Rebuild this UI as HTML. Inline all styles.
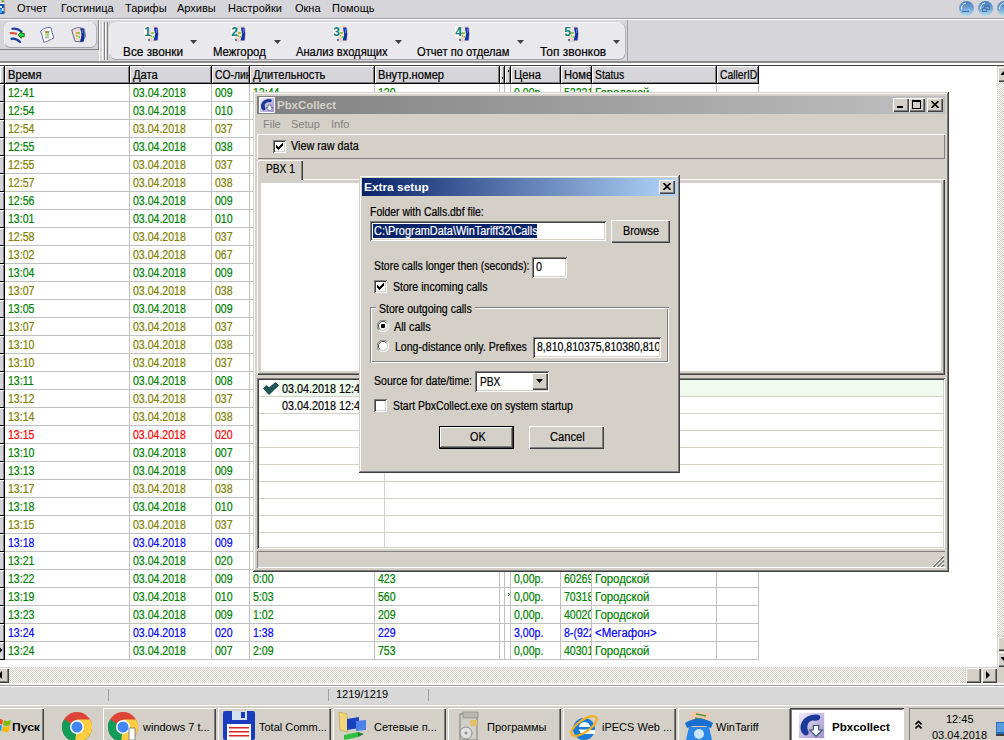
<!DOCTYPE html><html><head><meta charset="utf-8"><style>
*{margin:0;padding:0;box-sizing:border-box}
html,body{width:1004px;height:740px;overflow:hidden;background:#d6d5d9;font-family:"Liberation Sans",sans-serif;font-size:11px;color:#000}
div,span,svg{position:absolute}
.t{white-space:nowrap;line-height:13px;transform-origin:0 0}
.ms{-webkit-text-stroke:0.2px currentColor;-webkit-font-smoothing:antialiased}
</style></head><body>
<div style="left:0px;top:18px;width:1004px;height:1px;background:#a0a0a0"></div>
<div style="left:0px;top:19px;width:1004px;height:1px;background:#fff"></div>
<span class="t" style="left:17px;top:2px;font-size:11px;font-weight:normal;">Отчет</span>
<span class="t" style="left:61px;top:2px;font-size:11px;font-weight:normal;">Гостиница</span>
<span class="t" style="left:125px;top:2px;font-size:11px;font-weight:normal;">Тарифы</span>
<span class="t" style="left:177px;top:2px;font-size:11px;font-weight:normal;">Архивы</span>
<span class="t" style="left:228px;top:2px;font-size:11px;font-weight:normal;">Настройки</span>
<span class="t" style="left:295px;top:2px;font-size:11px;font-weight:normal;">Окна</span>
<span class="t" style="left:332px;top:2px;font-size:11px;font-weight:normal;">Помощь</span>
<svg style="left:0px;top:0px" width="10" height="16" viewBox="0 0 10 16"><path d="M0 1 L4 1 L6 5 L8 10 L6 13 L0 14Z" fill="#f0c8b8"/><rect x="0" y="3" width="4" height="1" fill="#fff"/><rect x="0" y="4" width="4.5" height="10" fill="#0a58b8"/><rect x="0" y="6" width="2" height="2" fill="#fff"/><rect x="2" y="8" width="1.5" height="3" fill="#fff"/><rect x="0" y="9" width="2" height="4" fill="#40a8f0"/><ellipse cx="3" cy="1.2" rx="1.5" ry="0.9" fill="#50a040"/></svg>
<div style="left:959px;top:1px;width:15px;height:15px;border-radius:50%;background:linear-gradient(180deg,#4278bc 0%,#72a6d8 50%,#b4dcea 100%)"></div>
<svg style="left:959px;top:1px" width="15" height="15" viewBox="0 0 15 15"><path d="M2.5 8 Q2.5 3 7 2" stroke="#e8f2fa" stroke-width="1" fill="none"/></svg>
<div style="left:978px;top:1px;width:15px;height:15px;border-radius:50%;background:linear-gradient(180deg,#4278bc 0%,#72a6d8 50%,#b4dcea 100%)"></div>
<svg style="left:978px;top:1px" width="15" height="15" viewBox="0 0 15 15"><path d="M2.5 8 Q2.5 3 7 2" stroke="#e8f2fa" stroke-width="1" fill="none"/></svg>
<div style="left:997px;top:1px;width:15px;height:15px;border-radius:50%;background:linear-gradient(180deg,#4278bc 0%,#72a6d8 50%,#b4dcea 100%)"></div>
<svg style="left:997px;top:1px" width="15" height="15" viewBox="0 0 15 15"><path d="M2.5 8 Q2.5 3 7 2" stroke="#e8f2fa" stroke-width="1" fill="none"/></svg>
<div style="left:962px;top:11px;width:7px;height:1px;background:#3a6aa8"></div>
<div style="left:984px;top:5px;width:6px;height:5px;border:1px solid #4a78b0;border-top-width:2px"></div>
<div style="left:982px;top:8px;width:5px;height:4px;border:1px solid #4a78b0;background:#7aaad8"></div>
<div style="left:0px;top:20px;width:99px;height:30px;box-shadow:inset -1px -1px #808080"></div>
<div style="left:5px;top:23px;width:91px;height:24px;border-radius:5px;background:#e9e8ec;box-shadow:0 1px #a4a3a8,1px 0 #b4b3b8,0 -1px #f4f4f6,-1px 0 #f0f0f2"></div>
<svg style="left:9px;top:27px" width="16" height="16" viewBox="0 0 16 16"><path d="M3.5 1.8 Q8 0.8 12.5 4.5" stroke="#1a40a0" stroke-width="2.2" fill="none" stroke-linecap="round"/><path d="M0.8 6.2 Q4 5.5 8 7" stroke="#e84a30" stroke-width="2.2" fill="none"/><path d="M2.5 11.8 Q7 11 11 15" stroke="#1a40a0" stroke-width="2.2" fill="none" stroke-linecap="round"/><path d="M9.3 8 L12.3 4.6 L12.3 6.4 L15.2 6.4 L15.2 9.6 L12.3 9.6 L12.3 11.4 Z" fill="#00f040" stroke="#205000" stroke-width="0.9"/></svg>
<svg style="left:40px;top:27px" width="16" height="16" viewBox="0 0 16 16"><path d="M0.5 4.2 L3.3 2 L7.2 0.5 L10.8 0.5 L12.2 5.4 L13.8 11 L7.2 14.3 L3.8 15.4 L2.1 8.2 Z" fill="#fffcf8" stroke="#5060a8" stroke-width="0.9"/><rect x="5.2" y="4" width="2" height="2" fill="#f07830"/><rect x="7.2" y="4" width="2" height="2" fill="#60b040"/><rect x="5.2" y="6" width="4" height="5" fill="#a8d898"/><rect x="5.2" y="10" width="4" height="1.5" fill="#b8c0c8"/></svg>
<svg style="left:71px;top:27px" width="16" height="16" viewBox="0 0 16 16"><path d="M0.7 3 L6.3 0.5 L13 1.5 L14.6 9.3 L11.3 14.8 L4 14.3 Z" fill="#f4dcd0" stroke="#506090" stroke-width="0.9"/><path d="M9 1.5 L12.5 1.8 Q14.5 8 12.5 14.8 L9 14.5 L10 11 Q11 8 10 4 Z" fill="#0c2a98"/><rect x="11" y="3" width="1.2" height="3" fill="#3a90e0"/><rect x="5" y="5" width="2" height="2" fill="#f0a040"/><rect x="7" y="5" width="2" height="2" fill="#80d040"/><rect x="5" y="8" width="1.5" height="2" fill="#f0a040"/><rect x="7.5" y="9" width="1.5" height="2" fill="#40f020"/></svg>
<div style="left:99px;top:20px;width:1px;height:41px;background:#fff"></div>
<div style="left:102px;top:22px;width:1px;height:38px;background:#fff"></div>
<div style="left:104px;top:22px;width:1px;height:38px;background:#808080"></div>
<div style="left:105px;top:22px;width:1px;height:38px;background:#fff"></div>
<div style="left:107px;top:22px;width:1px;height:38px;background:#808080"></div>
<div style="left:110px;top:23px;width:515px;height:36px;border-radius:6px;background:#e9e8ec;box-shadow:0 1px #a4a3a8,1px 0 #b4b3b8,0 -1px #f4f4f6,-1px 0 #f0f0f2"></div>
<div style="left:627px;top:20px;width:1px;height:42px;background:#a0a0a0"></div>
<span class="t ms" style="left:123px;top:46px;font-size:12px;font-weight:normal;transform:scaleX(0.985);">Все звонки</span>
<svg style="left:144px;top:26px" width="16" height="16" viewBox="0 0 16 16"><rect x="0" y="0" width="7.5" height="11.5" rx="2" fill="#fff"/><path d="M6 1 L13 0.5 L15 6 L14 14 L8 15.5 L5 12 Z" fill="#f6e4dc" stroke="#e8c4b0" stroke-width=".6"/><path d="M10 1.5 H13.5 Q15 8 13.5 14.5 H9.5 L10.5 11 Q12 8 10.5 5Z" fill="#1432a8"/><path d="M12 3 L13 3 L13 7 L12 7Z" fill="#3a8ae0"/><rect x="7" y="6" width="1" height="2" fill="#f0a040"/><rect x="8" y="6" width="2" height="2" fill="#80d040"/><rect x="7" y="9" width="1" height="2" fill="#f0a040"/><rect x="8.5" y="10" width="1.5" height="2" fill="#60f020"/><path d="M4 12 L8 12 L9 16 L5 16Z" fill="#e8d0c8"/><rect x="4" y="13" width="2" height="2" fill="#6878a0"/><text x="0.3" y="10" font-family="Liberation Sans" font-weight="bold" font-size="12" fill="#008080">1</text></svg>
<svg style="left:190px;top:40px" width="7" height="4" viewBox="0 0 7 4"><path d="M0 0 H7 L3.5 4 Z" fill="#404040"/></svg>
<span class="t ms" style="left:213px;top:46px;font-size:12px;font-weight:normal;transform:scaleX(0.95);">Межгород</span>
<svg style="left:231px;top:26px" width="16" height="16" viewBox="0 0 16 16"><rect x="0" y="0" width="7.5" height="11.5" rx="2" fill="#fff"/><path d="M6 1 L13 0.5 L15 6 L14 14 L8 15.5 L5 12 Z" fill="#f6e4dc" stroke="#e8c4b0" stroke-width=".6"/><path d="M10 1.5 H13.5 Q15 8 13.5 14.5 H9.5 L10.5 11 Q12 8 10.5 5Z" fill="#1432a8"/><path d="M12 3 L13 3 L13 7 L12 7Z" fill="#3a8ae0"/><rect x="7" y="6" width="1" height="2" fill="#f0a040"/><rect x="8" y="6" width="2" height="2" fill="#80d040"/><rect x="7" y="9" width="1" height="2" fill="#f0a040"/><rect x="8.5" y="10" width="1.5" height="2" fill="#60f020"/><path d="M4 12 L8 12 L9 16 L5 16Z" fill="#e8d0c8"/><rect x="4" y="13" width="2" height="2" fill="#6878a0"/><text x="0.3" y="10" font-family="Liberation Sans" font-weight="bold" font-size="12" fill="#008080">2</text></svg>
<svg style="left:274px;top:40px" width="7" height="4" viewBox="0 0 7 4"><path d="M0 0 H7 L3.5 4 Z" fill="#404040"/></svg>
<span class="t ms" style="left:296px;top:46px;font-size:12px;font-weight:normal;transform:scaleX(0.93);">Анализ входящих</span>
<svg style="left:333px;top:26px" width="16" height="16" viewBox="0 0 16 16"><rect x="0" y="0" width="7.5" height="11.5" rx="2" fill="#fff"/><path d="M6 1 L13 0.5 L15 6 L14 14 L8 15.5 L5 12 Z" fill="#f6e4dc" stroke="#e8c4b0" stroke-width=".6"/><path d="M10 1.5 H13.5 Q15 8 13.5 14.5 H9.5 L10.5 11 Q12 8 10.5 5Z" fill="#1432a8"/><path d="M12 3 L13 3 L13 7 L12 7Z" fill="#3a8ae0"/><rect x="7" y="6" width="1" height="2" fill="#f0a040"/><rect x="8" y="6" width="2" height="2" fill="#80d040"/><rect x="7" y="9" width="1" height="2" fill="#f0a040"/><rect x="8.5" y="10" width="1.5" height="2" fill="#60f020"/><path d="M4 12 L8 12 L9 16 L5 16Z" fill="#e8d0c8"/><rect x="4" y="13" width="2" height="2" fill="#6878a0"/><text x="0.3" y="10" font-family="Liberation Sans" font-weight="bold" font-size="12" fill="#008080">3</text></svg>
<svg style="left:395px;top:40px" width="7" height="4" viewBox="0 0 7 4"><path d="M0 0 H7 L3.5 4 Z" fill="#404040"/></svg>
<span class="t ms" style="left:417px;top:46px;font-size:12px;font-weight:normal;transform:scaleX(0.93);">Отчет по отделам</span>
<svg style="left:455px;top:26px" width="16" height="16" viewBox="0 0 16 16"><rect x="0" y="0" width="7.5" height="11.5" rx="2" fill="#fff"/><path d="M6 1 L13 0.5 L15 6 L14 14 L8 15.5 L5 12 Z" fill="#f6e4dc" stroke="#e8c4b0" stroke-width=".6"/><path d="M10 1.5 H13.5 Q15 8 13.5 14.5 H9.5 L10.5 11 Q12 8 10.5 5Z" fill="#1432a8"/><path d="M12 3 L13 3 L13 7 L12 7Z" fill="#3a8ae0"/><rect x="7" y="6" width="1" height="2" fill="#f0a040"/><rect x="8" y="6" width="2" height="2" fill="#80d040"/><rect x="7" y="9" width="1" height="2" fill="#f0a040"/><rect x="8.5" y="10" width="1.5" height="2" fill="#60f020"/><path d="M4 12 L8 12 L9 16 L5 16Z" fill="#e8d0c8"/><rect x="4" y="13" width="2" height="2" fill="#6878a0"/><text x="0.3" y="10" font-family="Liberation Sans" font-weight="bold" font-size="12" fill="#008080">4</text></svg>
<svg style="left:517px;top:40px" width="7" height="4" viewBox="0 0 7 4"><path d="M0 0 H7 L3.5 4 Z" fill="#404040"/></svg>
<span class="t ms" style="left:540px;top:46px;font-size:12px;font-weight:normal;transform:scaleX(0.997);">Топ звонков</span>
<svg style="left:564px;top:26px" width="16" height="16" viewBox="0 0 16 16"><rect x="0" y="0" width="7.5" height="11.5" rx="2" fill="#fff"/><path d="M6 1 L13 0.5 L15 6 L14 14 L8 15.5 L5 12 Z" fill="#f6e4dc" stroke="#e8c4b0" stroke-width=".6"/><path d="M10 1.5 H13.5 Q15 8 13.5 14.5 H9.5 L10.5 11 Q12 8 10.5 5Z" fill="#1432a8"/><path d="M12 3 L13 3 L13 7 L12 7Z" fill="#3a8ae0"/><rect x="7" y="6" width="1" height="2" fill="#f0a040"/><rect x="8" y="6" width="2" height="2" fill="#80d040"/><rect x="7" y="9" width="1" height="2" fill="#f0a040"/><rect x="8.5" y="10" width="1.5" height="2" fill="#60f020"/><path d="M4 12 L8 12 L9 16 L5 16Z" fill="#e8d0c8"/><rect x="4" y="13" width="2" height="2" fill="#6878a0"/><text x="0.3" y="10" font-family="Liberation Sans" font-weight="bold" font-size="12" fill="#008080">5</text></svg>
<svg style="left:613px;top:40px" width="7" height="4" viewBox="0 0 7 4"><path d="M0 0 H7 L3.5 4 Z" fill="#404040"/></svg>
<div style="left:0px;top:61px;width:1004px;height:2px;background:#8c8c8c"></div>
<div style="left:0px;top:63px;width:1004px;height:2px;background:#fff"></div>
<div style="left:0px;top:65px;width:1004px;height:1px;background:#404040"></div>
<div style="left:0px;top:66px;width:997px;height:601px;background:#fff"></div>
<div style="left:0px;top:66px;width:4px;height:17px;background:#d6d5d9;box-shadow:inset 1px 1px #fff,inset -1px -1px #808080;overflow:hidden"></div>
<div style="left:4px;top:66px;width:1px;height:18px;background:#000"></div>
<div style="left:5px;top:66px;width:124px;height:17px;background:#d6d5d9;box-shadow:inset 1px 1px #fff,inset -1px -1px #808080;overflow:hidden"><span class="t ms" style="left:3px;top:3px;font-size:12px;font-weight:normal;transform:scaleX(0.93);">Время</span></div>
<div style="left:129px;top:66px;width:1px;height:18px;background:#000"></div>
<div style="left:130px;top:66px;width:81px;height:17px;background:#d6d5d9;box-shadow:inset 1px 1px #fff,inset -1px -1px #808080;overflow:hidden"><span class="t ms" style="left:3px;top:3px;font-size:12px;font-weight:normal;transform:scaleX(0.93);">Дата</span></div>
<div style="left:211px;top:66px;width:1px;height:18px;background:#000"></div>
<div style="left:212px;top:66px;width:37px;height:17px;background:#d6d5d9;box-shadow:inset 1px 1px #fff,inset -1px -1px #808080;overflow:hidden"><span class="t ms" style="left:3px;top:3px;font-size:12px;font-weight:normal;transform:scaleX(0.86);">CO-линия</span></div>
<div style="left:249px;top:66px;width:1px;height:18px;background:#000"></div>
<div style="left:250px;top:66px;width:124px;height:17px;background:#d6d5d9;box-shadow:inset 1px 1px #fff,inset -1px -1px #808080;overflow:hidden"><span class="t ms" style="left:3px;top:3px;font-size:12px;font-weight:normal;transform:scaleX(0.93);">Длительность</span></div>
<div style="left:374px;top:66px;width:1px;height:18px;background:#000"></div>
<div style="left:375px;top:66px;width:124px;height:17px;background:#d6d5d9;box-shadow:inset 1px 1px #fff,inset -1px -1px #808080;overflow:hidden"><span class="t ms" style="left:3px;top:3px;font-size:12px;font-weight:normal;transform:scaleX(0.93);">Внутр.номер</span></div>
<div style="left:499px;top:66px;width:1px;height:18px;background:#000"></div>
<div style="left:500px;top:66px;width:4px;height:17px;background:#d6d5d9;box-shadow:inset 1px 1px #fff,inset -1px -1px #808080;overflow:hidden"></div>
<div style="left:504px;top:66px;width:1px;height:18px;background:#000"></div>
<div style="left:505px;top:66px;width:5px;height:17px;background:#d6d5d9;box-shadow:inset 1px 1px #fff,inset -1px -1px #808080;overflow:hidden"></div>
<div style="left:510px;top:66px;width:1px;height:18px;background:#000"></div>
<div style="left:511px;top:66px;width:49px;height:17px;background:#d6d5d9;box-shadow:inset 1px 1px #fff,inset -1px -1px #808080;overflow:hidden"><span class="t ms" style="left:3px;top:3px;font-size:12px;font-weight:normal;transform:scaleX(0.93);">Цена</span></div>
<div style="left:560px;top:66px;width:1px;height:18px;background:#000"></div>
<div style="left:561px;top:66px;width:30px;height:17px;background:#d6d5d9;box-shadow:inset 1px 1px #fff,inset -1px -1px #808080;overflow:hidden"><span class="t ms" style="left:3px;top:3px;font-size:12px;font-weight:normal;transform:scaleX(0.93);">Номер</span></div>
<div style="left:591px;top:66px;width:1px;height:18px;background:#000"></div>
<div style="left:592px;top:66px;width:124px;height:17px;background:#d6d5d9;box-shadow:inset 1px 1px #fff,inset -1px -1px #808080;overflow:hidden"><span class="t ms" style="left:3px;top:3px;font-size:12px;font-weight:normal;transform:scaleX(0.86);">Status</span></div>
<div style="left:716px;top:66px;width:1px;height:18px;background:#000"></div>
<div style="left:717px;top:66px;width:41px;height:17px;background:#d6d5d9;box-shadow:inset 1px 1px #fff,inset -1px -1px #808080;overflow:hidden"><span class="t ms" style="left:3px;top:3px;font-size:12px;font-weight:normal;transform:scaleX(0.86);">CallerID</span></div>
<div style="left:758px;top:66px;width:1px;height:18px;background:#000"></div>
<div style="left:0px;top:83px;width:759px;height:1px;background:#000"></div>
<div style="left:502px;top:77px;width:1px;height:2px;background:#000"></div><div style="left:508px;top:70px;width:1px;height:2px;background:#000"></div>
<div style="left:0px;top:84px;width:4px;height:17px;background:#d6d5d9;box-shadow:inset 0 1px #fff,inset -1px 0 #808080"></div>
<div style="left:0px;top:101px;width:4px;height:1px;background:#000"></div>
<div style="left:4px;top:84px;width:1px;height:18px;background:#000"></div>
<div style="left:5px;top:101px;width:754px;height:1px;background:#c0c0c0"></div>
<div style="left:129px;top:84px;width:1px;height:17px;background:#c0c0c0"></div>
<div style="left:211px;top:84px;width:1px;height:17px;background:#c0c0c0"></div>
<div style="left:249px;top:84px;width:1px;height:17px;background:#c0c0c0"></div>
<div style="left:374px;top:84px;width:1px;height:17px;background:#c0c0c0"></div>
<div style="left:499px;top:84px;width:1px;height:17px;background:#c0c0c0"></div>
<div style="left:504px;top:84px;width:1px;height:17px;background:#c0c0c0"></div>
<div style="left:510px;top:84px;width:1px;height:17px;background:#c0c0c0"></div>
<div style="left:560px;top:84px;width:1px;height:17px;background:#c0c0c0"></div>
<div style="left:591px;top:84px;width:1px;height:17px;background:#c0c0c0"></div>
<div style="left:716px;top:84px;width:1px;height:17px;background:#c0c0c0"></div>
<div style="left:758px;top:84px;width:1px;height:17px;background:#c0c0c0"></div>
<div style="left:5px;top:84px;width:124px;height:17px;overflow:hidden"><span class="t ms" style="left:3px;top:3px;font-size:12px;font-weight:normal;transform:scaleX(0.88);color:#008000">12:41</span></div>
<div style="left:130px;top:84px;width:81px;height:17px;overflow:hidden"><span class="t ms" style="left:3px;top:3px;font-size:12px;font-weight:normal;transform:scaleX(0.88);color:#008000">03.04.2018</span></div>
<div style="left:212px;top:84px;width:37px;height:17px;overflow:hidden"><span class="t ms" style="left:3px;top:3px;font-size:12px;font-weight:normal;transform:scaleX(0.88);color:#008000">009</span></div>
<div style="left:250px;top:84px;width:124px;height:17px;overflow:hidden"><span class="t ms" style="left:3px;top:3px;font-size:12px;font-weight:normal;transform:scaleX(0.88);color:#008000">12:44</span></div>
<div style="left:375px;top:84px;width:124px;height:17px;overflow:hidden"><span class="t ms" style="left:3px;top:3px;font-size:12px;font-weight:normal;transform:scaleX(0.88);color:#008000">120</span></div>
<div style="left:511px;top:84px;width:49px;height:17px;overflow:hidden"><span class="t ms" style="left:3px;top:3px;font-size:12px;font-weight:normal;transform:scaleX(0.88);color:#008000">0,00р.</span></div>
<div style="left:561px;top:84px;width:30px;height:17px;overflow:hidden"><span class="t ms" style="left:3px;top:3px;font-size:12px;font-weight:normal;transform:scaleX(0.88);color:#008000">52221</span></div>
<div style="left:592px;top:84px;width:124px;height:17px;overflow:hidden"><span class="t ms" style="left:3px;top:3px;font-size:12px;font-weight:normal;transform:scaleX(0.95);color:#008000">Городской</span></div>
<div style="left:0px;top:102px;width:4px;height:17px;background:#d6d5d9;box-shadow:inset 0 1px #fff,inset -1px 0 #808080"></div>
<div style="left:0px;top:119px;width:4px;height:1px;background:#000"></div>
<div style="left:4px;top:102px;width:1px;height:18px;background:#000"></div>
<div style="left:5px;top:119px;width:754px;height:1px;background:#c0c0c0"></div>
<div style="left:129px;top:102px;width:1px;height:17px;background:#c0c0c0"></div>
<div style="left:211px;top:102px;width:1px;height:17px;background:#c0c0c0"></div>
<div style="left:249px;top:102px;width:1px;height:17px;background:#c0c0c0"></div>
<div style="left:374px;top:102px;width:1px;height:17px;background:#c0c0c0"></div>
<div style="left:499px;top:102px;width:1px;height:17px;background:#c0c0c0"></div>
<div style="left:504px;top:102px;width:1px;height:17px;background:#c0c0c0"></div>
<div style="left:510px;top:102px;width:1px;height:17px;background:#c0c0c0"></div>
<div style="left:560px;top:102px;width:1px;height:17px;background:#c0c0c0"></div>
<div style="left:591px;top:102px;width:1px;height:17px;background:#c0c0c0"></div>
<div style="left:716px;top:102px;width:1px;height:17px;background:#c0c0c0"></div>
<div style="left:758px;top:102px;width:1px;height:17px;background:#c0c0c0"></div>
<div style="left:5px;top:102px;width:124px;height:17px;overflow:hidden"><span class="t ms" style="left:3px;top:3px;font-size:12px;font-weight:normal;transform:scaleX(0.88);color:#008000">12:54</span></div>
<div style="left:130px;top:102px;width:81px;height:17px;overflow:hidden"><span class="t ms" style="left:3px;top:3px;font-size:12px;font-weight:normal;transform:scaleX(0.88);color:#008000">03.04.2018</span></div>
<div style="left:212px;top:102px;width:37px;height:17px;overflow:hidden"><span class="t ms" style="left:3px;top:3px;font-size:12px;font-weight:normal;transform:scaleX(0.88);color:#008000">010</span></div>
<div style="left:0px;top:120px;width:4px;height:17px;background:#d6d5d9;box-shadow:inset 0 1px #fff,inset -1px 0 #808080"></div>
<div style="left:0px;top:137px;width:4px;height:1px;background:#000"></div>
<div style="left:4px;top:120px;width:1px;height:18px;background:#000"></div>
<div style="left:5px;top:137px;width:754px;height:1px;background:#c0c0c0"></div>
<div style="left:129px;top:120px;width:1px;height:17px;background:#c0c0c0"></div>
<div style="left:211px;top:120px;width:1px;height:17px;background:#c0c0c0"></div>
<div style="left:249px;top:120px;width:1px;height:17px;background:#c0c0c0"></div>
<div style="left:374px;top:120px;width:1px;height:17px;background:#c0c0c0"></div>
<div style="left:499px;top:120px;width:1px;height:17px;background:#c0c0c0"></div>
<div style="left:504px;top:120px;width:1px;height:17px;background:#c0c0c0"></div>
<div style="left:510px;top:120px;width:1px;height:17px;background:#c0c0c0"></div>
<div style="left:560px;top:120px;width:1px;height:17px;background:#c0c0c0"></div>
<div style="left:591px;top:120px;width:1px;height:17px;background:#c0c0c0"></div>
<div style="left:716px;top:120px;width:1px;height:17px;background:#c0c0c0"></div>
<div style="left:758px;top:120px;width:1px;height:17px;background:#c0c0c0"></div>
<div style="left:5px;top:120px;width:124px;height:17px;overflow:hidden"><span class="t ms" style="left:3px;top:3px;font-size:12px;font-weight:normal;transform:scaleX(0.88);color:#808000">12:54</span></div>
<div style="left:130px;top:120px;width:81px;height:17px;overflow:hidden"><span class="t ms" style="left:3px;top:3px;font-size:12px;font-weight:normal;transform:scaleX(0.88);color:#808000">03.04.2018</span></div>
<div style="left:212px;top:120px;width:37px;height:17px;overflow:hidden"><span class="t ms" style="left:3px;top:3px;font-size:12px;font-weight:normal;transform:scaleX(0.88);color:#808000">037</span></div>
<div style="left:0px;top:138px;width:4px;height:17px;background:#d6d5d9;box-shadow:inset 0 1px #fff,inset -1px 0 #808080"></div>
<div style="left:0px;top:155px;width:4px;height:1px;background:#000"></div>
<div style="left:4px;top:138px;width:1px;height:18px;background:#000"></div>
<div style="left:5px;top:155px;width:754px;height:1px;background:#c0c0c0"></div>
<div style="left:129px;top:138px;width:1px;height:17px;background:#c0c0c0"></div>
<div style="left:211px;top:138px;width:1px;height:17px;background:#c0c0c0"></div>
<div style="left:249px;top:138px;width:1px;height:17px;background:#c0c0c0"></div>
<div style="left:374px;top:138px;width:1px;height:17px;background:#c0c0c0"></div>
<div style="left:499px;top:138px;width:1px;height:17px;background:#c0c0c0"></div>
<div style="left:504px;top:138px;width:1px;height:17px;background:#c0c0c0"></div>
<div style="left:510px;top:138px;width:1px;height:17px;background:#c0c0c0"></div>
<div style="left:560px;top:138px;width:1px;height:17px;background:#c0c0c0"></div>
<div style="left:591px;top:138px;width:1px;height:17px;background:#c0c0c0"></div>
<div style="left:716px;top:138px;width:1px;height:17px;background:#c0c0c0"></div>
<div style="left:758px;top:138px;width:1px;height:17px;background:#c0c0c0"></div>
<div style="left:5px;top:138px;width:124px;height:17px;overflow:hidden"><span class="t ms" style="left:3px;top:3px;font-size:12px;font-weight:normal;transform:scaleX(0.88);color:#008000">12:55</span></div>
<div style="left:130px;top:138px;width:81px;height:17px;overflow:hidden"><span class="t ms" style="left:3px;top:3px;font-size:12px;font-weight:normal;transform:scaleX(0.88);color:#008000">03.04.2018</span></div>
<div style="left:212px;top:138px;width:37px;height:17px;overflow:hidden"><span class="t ms" style="left:3px;top:3px;font-size:12px;font-weight:normal;transform:scaleX(0.88);color:#008000">038</span></div>
<div style="left:0px;top:156px;width:4px;height:17px;background:#d6d5d9;box-shadow:inset 0 1px #fff,inset -1px 0 #808080"></div>
<div style="left:0px;top:173px;width:4px;height:1px;background:#000"></div>
<div style="left:4px;top:156px;width:1px;height:18px;background:#000"></div>
<div style="left:5px;top:173px;width:754px;height:1px;background:#c0c0c0"></div>
<div style="left:129px;top:156px;width:1px;height:17px;background:#c0c0c0"></div>
<div style="left:211px;top:156px;width:1px;height:17px;background:#c0c0c0"></div>
<div style="left:249px;top:156px;width:1px;height:17px;background:#c0c0c0"></div>
<div style="left:374px;top:156px;width:1px;height:17px;background:#c0c0c0"></div>
<div style="left:499px;top:156px;width:1px;height:17px;background:#c0c0c0"></div>
<div style="left:504px;top:156px;width:1px;height:17px;background:#c0c0c0"></div>
<div style="left:510px;top:156px;width:1px;height:17px;background:#c0c0c0"></div>
<div style="left:560px;top:156px;width:1px;height:17px;background:#c0c0c0"></div>
<div style="left:591px;top:156px;width:1px;height:17px;background:#c0c0c0"></div>
<div style="left:716px;top:156px;width:1px;height:17px;background:#c0c0c0"></div>
<div style="left:758px;top:156px;width:1px;height:17px;background:#c0c0c0"></div>
<div style="left:5px;top:156px;width:124px;height:17px;overflow:hidden"><span class="t ms" style="left:3px;top:3px;font-size:12px;font-weight:normal;transform:scaleX(0.88);color:#808000">12:55</span></div>
<div style="left:130px;top:156px;width:81px;height:17px;overflow:hidden"><span class="t ms" style="left:3px;top:3px;font-size:12px;font-weight:normal;transform:scaleX(0.88);color:#808000">03.04.2018</span></div>
<div style="left:212px;top:156px;width:37px;height:17px;overflow:hidden"><span class="t ms" style="left:3px;top:3px;font-size:12px;font-weight:normal;transform:scaleX(0.88);color:#808000">037</span></div>
<div style="left:0px;top:174px;width:4px;height:17px;background:#d6d5d9;box-shadow:inset 0 1px #fff,inset -1px 0 #808080"></div>
<div style="left:0px;top:191px;width:4px;height:1px;background:#000"></div>
<div style="left:4px;top:174px;width:1px;height:18px;background:#000"></div>
<div style="left:5px;top:191px;width:754px;height:1px;background:#c0c0c0"></div>
<div style="left:129px;top:174px;width:1px;height:17px;background:#c0c0c0"></div>
<div style="left:211px;top:174px;width:1px;height:17px;background:#c0c0c0"></div>
<div style="left:249px;top:174px;width:1px;height:17px;background:#c0c0c0"></div>
<div style="left:374px;top:174px;width:1px;height:17px;background:#c0c0c0"></div>
<div style="left:499px;top:174px;width:1px;height:17px;background:#c0c0c0"></div>
<div style="left:504px;top:174px;width:1px;height:17px;background:#c0c0c0"></div>
<div style="left:510px;top:174px;width:1px;height:17px;background:#c0c0c0"></div>
<div style="left:560px;top:174px;width:1px;height:17px;background:#c0c0c0"></div>
<div style="left:591px;top:174px;width:1px;height:17px;background:#c0c0c0"></div>
<div style="left:716px;top:174px;width:1px;height:17px;background:#c0c0c0"></div>
<div style="left:758px;top:174px;width:1px;height:17px;background:#c0c0c0"></div>
<div style="left:5px;top:174px;width:124px;height:17px;overflow:hidden"><span class="t ms" style="left:3px;top:3px;font-size:12px;font-weight:normal;transform:scaleX(0.88);color:#808000">12:57</span></div>
<div style="left:130px;top:174px;width:81px;height:17px;overflow:hidden"><span class="t ms" style="left:3px;top:3px;font-size:12px;font-weight:normal;transform:scaleX(0.88);color:#808000">03.04.2018</span></div>
<div style="left:212px;top:174px;width:37px;height:17px;overflow:hidden"><span class="t ms" style="left:3px;top:3px;font-size:12px;font-weight:normal;transform:scaleX(0.88);color:#808000">038</span></div>
<div style="left:0px;top:192px;width:4px;height:17px;background:#d6d5d9;box-shadow:inset 0 1px #fff,inset -1px 0 #808080"></div>
<div style="left:0px;top:209px;width:4px;height:1px;background:#000"></div>
<div style="left:4px;top:192px;width:1px;height:18px;background:#000"></div>
<div style="left:5px;top:209px;width:754px;height:1px;background:#c0c0c0"></div>
<div style="left:129px;top:192px;width:1px;height:17px;background:#c0c0c0"></div>
<div style="left:211px;top:192px;width:1px;height:17px;background:#c0c0c0"></div>
<div style="left:249px;top:192px;width:1px;height:17px;background:#c0c0c0"></div>
<div style="left:374px;top:192px;width:1px;height:17px;background:#c0c0c0"></div>
<div style="left:499px;top:192px;width:1px;height:17px;background:#c0c0c0"></div>
<div style="left:504px;top:192px;width:1px;height:17px;background:#c0c0c0"></div>
<div style="left:510px;top:192px;width:1px;height:17px;background:#c0c0c0"></div>
<div style="left:560px;top:192px;width:1px;height:17px;background:#c0c0c0"></div>
<div style="left:591px;top:192px;width:1px;height:17px;background:#c0c0c0"></div>
<div style="left:716px;top:192px;width:1px;height:17px;background:#c0c0c0"></div>
<div style="left:758px;top:192px;width:1px;height:17px;background:#c0c0c0"></div>
<div style="left:5px;top:192px;width:124px;height:17px;overflow:hidden"><span class="t ms" style="left:3px;top:3px;font-size:12px;font-weight:normal;transform:scaleX(0.88);color:#008000">12:56</span></div>
<div style="left:130px;top:192px;width:81px;height:17px;overflow:hidden"><span class="t ms" style="left:3px;top:3px;font-size:12px;font-weight:normal;transform:scaleX(0.88);color:#008000">03.04.2018</span></div>
<div style="left:212px;top:192px;width:37px;height:17px;overflow:hidden"><span class="t ms" style="left:3px;top:3px;font-size:12px;font-weight:normal;transform:scaleX(0.88);color:#008000">009</span></div>
<div style="left:0px;top:210px;width:4px;height:17px;background:#d6d5d9;box-shadow:inset 0 1px #fff,inset -1px 0 #808080"></div>
<div style="left:0px;top:227px;width:4px;height:1px;background:#000"></div>
<div style="left:4px;top:210px;width:1px;height:18px;background:#000"></div>
<div style="left:5px;top:227px;width:754px;height:1px;background:#c0c0c0"></div>
<div style="left:129px;top:210px;width:1px;height:17px;background:#c0c0c0"></div>
<div style="left:211px;top:210px;width:1px;height:17px;background:#c0c0c0"></div>
<div style="left:249px;top:210px;width:1px;height:17px;background:#c0c0c0"></div>
<div style="left:374px;top:210px;width:1px;height:17px;background:#c0c0c0"></div>
<div style="left:499px;top:210px;width:1px;height:17px;background:#c0c0c0"></div>
<div style="left:504px;top:210px;width:1px;height:17px;background:#c0c0c0"></div>
<div style="left:510px;top:210px;width:1px;height:17px;background:#c0c0c0"></div>
<div style="left:560px;top:210px;width:1px;height:17px;background:#c0c0c0"></div>
<div style="left:591px;top:210px;width:1px;height:17px;background:#c0c0c0"></div>
<div style="left:716px;top:210px;width:1px;height:17px;background:#c0c0c0"></div>
<div style="left:758px;top:210px;width:1px;height:17px;background:#c0c0c0"></div>
<div style="left:5px;top:210px;width:124px;height:17px;overflow:hidden"><span class="t ms" style="left:3px;top:3px;font-size:12px;font-weight:normal;transform:scaleX(0.88);color:#008000">13:01</span></div>
<div style="left:130px;top:210px;width:81px;height:17px;overflow:hidden"><span class="t ms" style="left:3px;top:3px;font-size:12px;font-weight:normal;transform:scaleX(0.88);color:#008000">03.04.2018</span></div>
<div style="left:212px;top:210px;width:37px;height:17px;overflow:hidden"><span class="t ms" style="left:3px;top:3px;font-size:12px;font-weight:normal;transform:scaleX(0.88);color:#008000">010</span></div>
<div style="left:0px;top:228px;width:4px;height:17px;background:#d6d5d9;box-shadow:inset 0 1px #fff,inset -1px 0 #808080"></div>
<div style="left:0px;top:245px;width:4px;height:1px;background:#000"></div>
<div style="left:4px;top:228px;width:1px;height:18px;background:#000"></div>
<div style="left:5px;top:245px;width:754px;height:1px;background:#c0c0c0"></div>
<div style="left:129px;top:228px;width:1px;height:17px;background:#c0c0c0"></div>
<div style="left:211px;top:228px;width:1px;height:17px;background:#c0c0c0"></div>
<div style="left:249px;top:228px;width:1px;height:17px;background:#c0c0c0"></div>
<div style="left:374px;top:228px;width:1px;height:17px;background:#c0c0c0"></div>
<div style="left:499px;top:228px;width:1px;height:17px;background:#c0c0c0"></div>
<div style="left:504px;top:228px;width:1px;height:17px;background:#c0c0c0"></div>
<div style="left:510px;top:228px;width:1px;height:17px;background:#c0c0c0"></div>
<div style="left:560px;top:228px;width:1px;height:17px;background:#c0c0c0"></div>
<div style="left:591px;top:228px;width:1px;height:17px;background:#c0c0c0"></div>
<div style="left:716px;top:228px;width:1px;height:17px;background:#c0c0c0"></div>
<div style="left:758px;top:228px;width:1px;height:17px;background:#c0c0c0"></div>
<div style="left:5px;top:228px;width:124px;height:17px;overflow:hidden"><span class="t ms" style="left:3px;top:3px;font-size:12px;font-weight:normal;transform:scaleX(0.88);color:#808000">12:58</span></div>
<div style="left:130px;top:228px;width:81px;height:17px;overflow:hidden"><span class="t ms" style="left:3px;top:3px;font-size:12px;font-weight:normal;transform:scaleX(0.88);color:#808000">03.04.2018</span></div>
<div style="left:212px;top:228px;width:37px;height:17px;overflow:hidden"><span class="t ms" style="left:3px;top:3px;font-size:12px;font-weight:normal;transform:scaleX(0.88);color:#808000">037</span></div>
<div style="left:0px;top:246px;width:4px;height:17px;background:#d6d5d9;box-shadow:inset 0 1px #fff,inset -1px 0 #808080"></div>
<div style="left:0px;top:263px;width:4px;height:1px;background:#000"></div>
<div style="left:4px;top:246px;width:1px;height:18px;background:#000"></div>
<div style="left:5px;top:263px;width:754px;height:1px;background:#c0c0c0"></div>
<div style="left:129px;top:246px;width:1px;height:17px;background:#c0c0c0"></div>
<div style="left:211px;top:246px;width:1px;height:17px;background:#c0c0c0"></div>
<div style="left:249px;top:246px;width:1px;height:17px;background:#c0c0c0"></div>
<div style="left:374px;top:246px;width:1px;height:17px;background:#c0c0c0"></div>
<div style="left:499px;top:246px;width:1px;height:17px;background:#c0c0c0"></div>
<div style="left:504px;top:246px;width:1px;height:17px;background:#c0c0c0"></div>
<div style="left:510px;top:246px;width:1px;height:17px;background:#c0c0c0"></div>
<div style="left:560px;top:246px;width:1px;height:17px;background:#c0c0c0"></div>
<div style="left:591px;top:246px;width:1px;height:17px;background:#c0c0c0"></div>
<div style="left:716px;top:246px;width:1px;height:17px;background:#c0c0c0"></div>
<div style="left:758px;top:246px;width:1px;height:17px;background:#c0c0c0"></div>
<div style="left:5px;top:246px;width:124px;height:17px;overflow:hidden"><span class="t ms" style="left:3px;top:3px;font-size:12px;font-weight:normal;transform:scaleX(0.88);color:#808000">13:02</span></div>
<div style="left:130px;top:246px;width:81px;height:17px;overflow:hidden"><span class="t ms" style="left:3px;top:3px;font-size:12px;font-weight:normal;transform:scaleX(0.88);color:#808000">03.04.2018</span></div>
<div style="left:212px;top:246px;width:37px;height:17px;overflow:hidden"><span class="t ms" style="left:3px;top:3px;font-size:12px;font-weight:normal;transform:scaleX(0.88);color:#808000">067</span></div>
<div style="left:0px;top:264px;width:4px;height:17px;background:#d6d5d9;box-shadow:inset 0 1px #fff,inset -1px 0 #808080"></div>
<div style="left:0px;top:281px;width:4px;height:1px;background:#000"></div>
<div style="left:4px;top:264px;width:1px;height:18px;background:#000"></div>
<div style="left:5px;top:281px;width:754px;height:1px;background:#c0c0c0"></div>
<div style="left:129px;top:264px;width:1px;height:17px;background:#c0c0c0"></div>
<div style="left:211px;top:264px;width:1px;height:17px;background:#c0c0c0"></div>
<div style="left:249px;top:264px;width:1px;height:17px;background:#c0c0c0"></div>
<div style="left:374px;top:264px;width:1px;height:17px;background:#c0c0c0"></div>
<div style="left:499px;top:264px;width:1px;height:17px;background:#c0c0c0"></div>
<div style="left:504px;top:264px;width:1px;height:17px;background:#c0c0c0"></div>
<div style="left:510px;top:264px;width:1px;height:17px;background:#c0c0c0"></div>
<div style="left:560px;top:264px;width:1px;height:17px;background:#c0c0c0"></div>
<div style="left:591px;top:264px;width:1px;height:17px;background:#c0c0c0"></div>
<div style="left:716px;top:264px;width:1px;height:17px;background:#c0c0c0"></div>
<div style="left:758px;top:264px;width:1px;height:17px;background:#c0c0c0"></div>
<div style="left:5px;top:264px;width:124px;height:17px;overflow:hidden"><span class="t ms" style="left:3px;top:3px;font-size:12px;font-weight:normal;transform:scaleX(0.88);color:#008000">13:04</span></div>
<div style="left:130px;top:264px;width:81px;height:17px;overflow:hidden"><span class="t ms" style="left:3px;top:3px;font-size:12px;font-weight:normal;transform:scaleX(0.88);color:#008000">03.04.2018</span></div>
<div style="left:212px;top:264px;width:37px;height:17px;overflow:hidden"><span class="t ms" style="left:3px;top:3px;font-size:12px;font-weight:normal;transform:scaleX(0.88);color:#008000">009</span></div>
<div style="left:0px;top:282px;width:4px;height:17px;background:#d6d5d9;box-shadow:inset 0 1px #fff,inset -1px 0 #808080"></div>
<div style="left:0px;top:299px;width:4px;height:1px;background:#000"></div>
<div style="left:4px;top:282px;width:1px;height:18px;background:#000"></div>
<div style="left:5px;top:299px;width:754px;height:1px;background:#c0c0c0"></div>
<div style="left:129px;top:282px;width:1px;height:17px;background:#c0c0c0"></div>
<div style="left:211px;top:282px;width:1px;height:17px;background:#c0c0c0"></div>
<div style="left:249px;top:282px;width:1px;height:17px;background:#c0c0c0"></div>
<div style="left:374px;top:282px;width:1px;height:17px;background:#c0c0c0"></div>
<div style="left:499px;top:282px;width:1px;height:17px;background:#c0c0c0"></div>
<div style="left:504px;top:282px;width:1px;height:17px;background:#c0c0c0"></div>
<div style="left:510px;top:282px;width:1px;height:17px;background:#c0c0c0"></div>
<div style="left:560px;top:282px;width:1px;height:17px;background:#c0c0c0"></div>
<div style="left:591px;top:282px;width:1px;height:17px;background:#c0c0c0"></div>
<div style="left:716px;top:282px;width:1px;height:17px;background:#c0c0c0"></div>
<div style="left:758px;top:282px;width:1px;height:17px;background:#c0c0c0"></div>
<div style="left:5px;top:282px;width:124px;height:17px;overflow:hidden"><span class="t ms" style="left:3px;top:3px;font-size:12px;font-weight:normal;transform:scaleX(0.88);color:#808000">13:07</span></div>
<div style="left:130px;top:282px;width:81px;height:17px;overflow:hidden"><span class="t ms" style="left:3px;top:3px;font-size:12px;font-weight:normal;transform:scaleX(0.88);color:#808000">03.04.2018</span></div>
<div style="left:212px;top:282px;width:37px;height:17px;overflow:hidden"><span class="t ms" style="left:3px;top:3px;font-size:12px;font-weight:normal;transform:scaleX(0.88);color:#808000">038</span></div>
<div style="left:0px;top:300px;width:4px;height:17px;background:#d6d5d9;box-shadow:inset 0 1px #fff,inset -1px 0 #808080"></div>
<div style="left:0px;top:317px;width:4px;height:1px;background:#000"></div>
<div style="left:4px;top:300px;width:1px;height:18px;background:#000"></div>
<div style="left:5px;top:317px;width:754px;height:1px;background:#c0c0c0"></div>
<div style="left:129px;top:300px;width:1px;height:17px;background:#c0c0c0"></div>
<div style="left:211px;top:300px;width:1px;height:17px;background:#c0c0c0"></div>
<div style="left:249px;top:300px;width:1px;height:17px;background:#c0c0c0"></div>
<div style="left:374px;top:300px;width:1px;height:17px;background:#c0c0c0"></div>
<div style="left:499px;top:300px;width:1px;height:17px;background:#c0c0c0"></div>
<div style="left:504px;top:300px;width:1px;height:17px;background:#c0c0c0"></div>
<div style="left:510px;top:300px;width:1px;height:17px;background:#c0c0c0"></div>
<div style="left:560px;top:300px;width:1px;height:17px;background:#c0c0c0"></div>
<div style="left:591px;top:300px;width:1px;height:17px;background:#c0c0c0"></div>
<div style="left:716px;top:300px;width:1px;height:17px;background:#c0c0c0"></div>
<div style="left:758px;top:300px;width:1px;height:17px;background:#c0c0c0"></div>
<div style="left:5px;top:300px;width:124px;height:17px;overflow:hidden"><span class="t ms" style="left:3px;top:3px;font-size:12px;font-weight:normal;transform:scaleX(0.88);color:#008000">13:05</span></div>
<div style="left:130px;top:300px;width:81px;height:17px;overflow:hidden"><span class="t ms" style="left:3px;top:3px;font-size:12px;font-weight:normal;transform:scaleX(0.88);color:#008000">03.04.2018</span></div>
<div style="left:212px;top:300px;width:37px;height:17px;overflow:hidden"><span class="t ms" style="left:3px;top:3px;font-size:12px;font-weight:normal;transform:scaleX(0.88);color:#008000">009</span></div>
<div style="left:0px;top:318px;width:4px;height:17px;background:#d6d5d9;box-shadow:inset 0 1px #fff,inset -1px 0 #808080"></div>
<div style="left:0px;top:335px;width:4px;height:1px;background:#000"></div>
<div style="left:4px;top:318px;width:1px;height:18px;background:#000"></div>
<div style="left:5px;top:335px;width:754px;height:1px;background:#c0c0c0"></div>
<div style="left:129px;top:318px;width:1px;height:17px;background:#c0c0c0"></div>
<div style="left:211px;top:318px;width:1px;height:17px;background:#c0c0c0"></div>
<div style="left:249px;top:318px;width:1px;height:17px;background:#c0c0c0"></div>
<div style="left:374px;top:318px;width:1px;height:17px;background:#c0c0c0"></div>
<div style="left:499px;top:318px;width:1px;height:17px;background:#c0c0c0"></div>
<div style="left:504px;top:318px;width:1px;height:17px;background:#c0c0c0"></div>
<div style="left:510px;top:318px;width:1px;height:17px;background:#c0c0c0"></div>
<div style="left:560px;top:318px;width:1px;height:17px;background:#c0c0c0"></div>
<div style="left:591px;top:318px;width:1px;height:17px;background:#c0c0c0"></div>
<div style="left:716px;top:318px;width:1px;height:17px;background:#c0c0c0"></div>
<div style="left:758px;top:318px;width:1px;height:17px;background:#c0c0c0"></div>
<div style="left:5px;top:318px;width:124px;height:17px;overflow:hidden"><span class="t ms" style="left:3px;top:3px;font-size:12px;font-weight:normal;transform:scaleX(0.88);color:#808000">13:07</span></div>
<div style="left:130px;top:318px;width:81px;height:17px;overflow:hidden"><span class="t ms" style="left:3px;top:3px;font-size:12px;font-weight:normal;transform:scaleX(0.88);color:#808000">03.04.2018</span></div>
<div style="left:212px;top:318px;width:37px;height:17px;overflow:hidden"><span class="t ms" style="left:3px;top:3px;font-size:12px;font-weight:normal;transform:scaleX(0.88);color:#808000">037</span></div>
<div style="left:0px;top:336px;width:4px;height:17px;background:#d6d5d9;box-shadow:inset 0 1px #fff,inset -1px 0 #808080"></div>
<div style="left:0px;top:353px;width:4px;height:1px;background:#000"></div>
<div style="left:4px;top:336px;width:1px;height:18px;background:#000"></div>
<div style="left:5px;top:353px;width:754px;height:1px;background:#c0c0c0"></div>
<div style="left:129px;top:336px;width:1px;height:17px;background:#c0c0c0"></div>
<div style="left:211px;top:336px;width:1px;height:17px;background:#c0c0c0"></div>
<div style="left:249px;top:336px;width:1px;height:17px;background:#c0c0c0"></div>
<div style="left:374px;top:336px;width:1px;height:17px;background:#c0c0c0"></div>
<div style="left:499px;top:336px;width:1px;height:17px;background:#c0c0c0"></div>
<div style="left:504px;top:336px;width:1px;height:17px;background:#c0c0c0"></div>
<div style="left:510px;top:336px;width:1px;height:17px;background:#c0c0c0"></div>
<div style="left:560px;top:336px;width:1px;height:17px;background:#c0c0c0"></div>
<div style="left:591px;top:336px;width:1px;height:17px;background:#c0c0c0"></div>
<div style="left:716px;top:336px;width:1px;height:17px;background:#c0c0c0"></div>
<div style="left:758px;top:336px;width:1px;height:17px;background:#c0c0c0"></div>
<div style="left:5px;top:336px;width:124px;height:17px;overflow:hidden"><span class="t ms" style="left:3px;top:3px;font-size:12px;font-weight:normal;transform:scaleX(0.88);color:#808000">13:10</span></div>
<div style="left:130px;top:336px;width:81px;height:17px;overflow:hidden"><span class="t ms" style="left:3px;top:3px;font-size:12px;font-weight:normal;transform:scaleX(0.88);color:#808000">03.04.2018</span></div>
<div style="left:212px;top:336px;width:37px;height:17px;overflow:hidden"><span class="t ms" style="left:3px;top:3px;font-size:12px;font-weight:normal;transform:scaleX(0.88);color:#808000">038</span></div>
<div style="left:0px;top:354px;width:4px;height:17px;background:#d6d5d9;box-shadow:inset 0 1px #fff,inset -1px 0 #808080"></div>
<div style="left:0px;top:371px;width:4px;height:1px;background:#000"></div>
<div style="left:4px;top:354px;width:1px;height:18px;background:#000"></div>
<div style="left:5px;top:371px;width:754px;height:1px;background:#c0c0c0"></div>
<div style="left:129px;top:354px;width:1px;height:17px;background:#c0c0c0"></div>
<div style="left:211px;top:354px;width:1px;height:17px;background:#c0c0c0"></div>
<div style="left:249px;top:354px;width:1px;height:17px;background:#c0c0c0"></div>
<div style="left:374px;top:354px;width:1px;height:17px;background:#c0c0c0"></div>
<div style="left:499px;top:354px;width:1px;height:17px;background:#c0c0c0"></div>
<div style="left:504px;top:354px;width:1px;height:17px;background:#c0c0c0"></div>
<div style="left:510px;top:354px;width:1px;height:17px;background:#c0c0c0"></div>
<div style="left:560px;top:354px;width:1px;height:17px;background:#c0c0c0"></div>
<div style="left:591px;top:354px;width:1px;height:17px;background:#c0c0c0"></div>
<div style="left:716px;top:354px;width:1px;height:17px;background:#c0c0c0"></div>
<div style="left:758px;top:354px;width:1px;height:17px;background:#c0c0c0"></div>
<div style="left:5px;top:354px;width:124px;height:17px;overflow:hidden"><span class="t ms" style="left:3px;top:3px;font-size:12px;font-weight:normal;transform:scaleX(0.88);color:#808000">13:10</span></div>
<div style="left:130px;top:354px;width:81px;height:17px;overflow:hidden"><span class="t ms" style="left:3px;top:3px;font-size:12px;font-weight:normal;transform:scaleX(0.88);color:#808000">03.04.2018</span></div>
<div style="left:212px;top:354px;width:37px;height:17px;overflow:hidden"><span class="t ms" style="left:3px;top:3px;font-size:12px;font-weight:normal;transform:scaleX(0.88);color:#808000">037</span></div>
<div style="left:0px;top:372px;width:4px;height:17px;background:#d6d5d9;box-shadow:inset 0 1px #fff,inset -1px 0 #808080"></div>
<div style="left:0px;top:389px;width:4px;height:1px;background:#000"></div>
<div style="left:4px;top:372px;width:1px;height:18px;background:#000"></div>
<div style="left:5px;top:389px;width:754px;height:1px;background:#c0c0c0"></div>
<div style="left:129px;top:372px;width:1px;height:17px;background:#c0c0c0"></div>
<div style="left:211px;top:372px;width:1px;height:17px;background:#c0c0c0"></div>
<div style="left:249px;top:372px;width:1px;height:17px;background:#c0c0c0"></div>
<div style="left:374px;top:372px;width:1px;height:17px;background:#c0c0c0"></div>
<div style="left:499px;top:372px;width:1px;height:17px;background:#c0c0c0"></div>
<div style="left:504px;top:372px;width:1px;height:17px;background:#c0c0c0"></div>
<div style="left:510px;top:372px;width:1px;height:17px;background:#c0c0c0"></div>
<div style="left:560px;top:372px;width:1px;height:17px;background:#c0c0c0"></div>
<div style="left:591px;top:372px;width:1px;height:17px;background:#c0c0c0"></div>
<div style="left:716px;top:372px;width:1px;height:17px;background:#c0c0c0"></div>
<div style="left:758px;top:372px;width:1px;height:17px;background:#c0c0c0"></div>
<div style="left:5px;top:372px;width:124px;height:17px;overflow:hidden"><span class="t ms" style="left:3px;top:3px;font-size:12px;font-weight:normal;transform:scaleX(0.88);color:#008000">13:11</span></div>
<div style="left:130px;top:372px;width:81px;height:17px;overflow:hidden"><span class="t ms" style="left:3px;top:3px;font-size:12px;font-weight:normal;transform:scaleX(0.88);color:#008000">03.04.2018</span></div>
<div style="left:212px;top:372px;width:37px;height:17px;overflow:hidden"><span class="t ms" style="left:3px;top:3px;font-size:12px;font-weight:normal;transform:scaleX(0.88);color:#008000">008</span></div>
<div style="left:0px;top:390px;width:4px;height:17px;background:#d6d5d9;box-shadow:inset 0 1px #fff,inset -1px 0 #808080"></div>
<div style="left:0px;top:407px;width:4px;height:1px;background:#000"></div>
<div style="left:4px;top:390px;width:1px;height:18px;background:#000"></div>
<div style="left:5px;top:407px;width:754px;height:1px;background:#c0c0c0"></div>
<div style="left:129px;top:390px;width:1px;height:17px;background:#c0c0c0"></div>
<div style="left:211px;top:390px;width:1px;height:17px;background:#c0c0c0"></div>
<div style="left:249px;top:390px;width:1px;height:17px;background:#c0c0c0"></div>
<div style="left:374px;top:390px;width:1px;height:17px;background:#c0c0c0"></div>
<div style="left:499px;top:390px;width:1px;height:17px;background:#c0c0c0"></div>
<div style="left:504px;top:390px;width:1px;height:17px;background:#c0c0c0"></div>
<div style="left:510px;top:390px;width:1px;height:17px;background:#c0c0c0"></div>
<div style="left:560px;top:390px;width:1px;height:17px;background:#c0c0c0"></div>
<div style="left:591px;top:390px;width:1px;height:17px;background:#c0c0c0"></div>
<div style="left:716px;top:390px;width:1px;height:17px;background:#c0c0c0"></div>
<div style="left:758px;top:390px;width:1px;height:17px;background:#c0c0c0"></div>
<div style="left:5px;top:390px;width:124px;height:17px;overflow:hidden"><span class="t ms" style="left:3px;top:3px;font-size:12px;font-weight:normal;transform:scaleX(0.88);color:#808000">13:12</span></div>
<div style="left:130px;top:390px;width:81px;height:17px;overflow:hidden"><span class="t ms" style="left:3px;top:3px;font-size:12px;font-weight:normal;transform:scaleX(0.88);color:#808000">03.04.2018</span></div>
<div style="left:212px;top:390px;width:37px;height:17px;overflow:hidden"><span class="t ms" style="left:3px;top:3px;font-size:12px;font-weight:normal;transform:scaleX(0.88);color:#808000">037</span></div>
<div style="left:0px;top:408px;width:4px;height:17px;background:#d6d5d9;box-shadow:inset 0 1px #fff,inset -1px 0 #808080"></div>
<div style="left:0px;top:425px;width:4px;height:1px;background:#000"></div>
<div style="left:4px;top:408px;width:1px;height:18px;background:#000"></div>
<div style="left:5px;top:425px;width:754px;height:1px;background:#c0c0c0"></div>
<div style="left:129px;top:408px;width:1px;height:17px;background:#c0c0c0"></div>
<div style="left:211px;top:408px;width:1px;height:17px;background:#c0c0c0"></div>
<div style="left:249px;top:408px;width:1px;height:17px;background:#c0c0c0"></div>
<div style="left:374px;top:408px;width:1px;height:17px;background:#c0c0c0"></div>
<div style="left:499px;top:408px;width:1px;height:17px;background:#c0c0c0"></div>
<div style="left:504px;top:408px;width:1px;height:17px;background:#c0c0c0"></div>
<div style="left:510px;top:408px;width:1px;height:17px;background:#c0c0c0"></div>
<div style="left:560px;top:408px;width:1px;height:17px;background:#c0c0c0"></div>
<div style="left:591px;top:408px;width:1px;height:17px;background:#c0c0c0"></div>
<div style="left:716px;top:408px;width:1px;height:17px;background:#c0c0c0"></div>
<div style="left:758px;top:408px;width:1px;height:17px;background:#c0c0c0"></div>
<div style="left:5px;top:408px;width:124px;height:17px;overflow:hidden"><span class="t ms" style="left:3px;top:3px;font-size:12px;font-weight:normal;transform:scaleX(0.88);color:#808000">13:14</span></div>
<div style="left:130px;top:408px;width:81px;height:17px;overflow:hidden"><span class="t ms" style="left:3px;top:3px;font-size:12px;font-weight:normal;transform:scaleX(0.88);color:#808000">03.04.2018</span></div>
<div style="left:212px;top:408px;width:37px;height:17px;overflow:hidden"><span class="t ms" style="left:3px;top:3px;font-size:12px;font-weight:normal;transform:scaleX(0.88);color:#808000">038</span></div>
<div style="left:0px;top:426px;width:4px;height:17px;background:#d6d5d9;box-shadow:inset 0 1px #fff,inset -1px 0 #808080"></div>
<div style="left:0px;top:443px;width:4px;height:1px;background:#000"></div>
<div style="left:4px;top:426px;width:1px;height:18px;background:#000"></div>
<div style="left:5px;top:443px;width:754px;height:1px;background:#c0c0c0"></div>
<div style="left:129px;top:426px;width:1px;height:17px;background:#c0c0c0"></div>
<div style="left:211px;top:426px;width:1px;height:17px;background:#c0c0c0"></div>
<div style="left:249px;top:426px;width:1px;height:17px;background:#c0c0c0"></div>
<div style="left:374px;top:426px;width:1px;height:17px;background:#c0c0c0"></div>
<div style="left:499px;top:426px;width:1px;height:17px;background:#c0c0c0"></div>
<div style="left:504px;top:426px;width:1px;height:17px;background:#c0c0c0"></div>
<div style="left:510px;top:426px;width:1px;height:17px;background:#c0c0c0"></div>
<div style="left:560px;top:426px;width:1px;height:17px;background:#c0c0c0"></div>
<div style="left:591px;top:426px;width:1px;height:17px;background:#c0c0c0"></div>
<div style="left:716px;top:426px;width:1px;height:17px;background:#c0c0c0"></div>
<div style="left:758px;top:426px;width:1px;height:17px;background:#c0c0c0"></div>
<div style="left:5px;top:426px;width:124px;height:17px;overflow:hidden"><span class="t ms" style="left:3px;top:3px;font-size:12px;font-weight:normal;transform:scaleX(0.88);color:#ff0000">13:15</span></div>
<div style="left:130px;top:426px;width:81px;height:17px;overflow:hidden"><span class="t ms" style="left:3px;top:3px;font-size:12px;font-weight:normal;transform:scaleX(0.88);color:#ff0000">03.04.2018</span></div>
<div style="left:212px;top:426px;width:37px;height:17px;overflow:hidden"><span class="t ms" style="left:3px;top:3px;font-size:12px;font-weight:normal;transform:scaleX(0.88);color:#ff0000">020</span></div>
<div style="left:0px;top:444px;width:4px;height:17px;background:#d6d5d9;box-shadow:inset 0 1px #fff,inset -1px 0 #808080"></div>
<div style="left:0px;top:461px;width:4px;height:1px;background:#000"></div>
<div style="left:4px;top:444px;width:1px;height:18px;background:#000"></div>
<div style="left:5px;top:461px;width:754px;height:1px;background:#c0c0c0"></div>
<div style="left:129px;top:444px;width:1px;height:17px;background:#c0c0c0"></div>
<div style="left:211px;top:444px;width:1px;height:17px;background:#c0c0c0"></div>
<div style="left:249px;top:444px;width:1px;height:17px;background:#c0c0c0"></div>
<div style="left:374px;top:444px;width:1px;height:17px;background:#c0c0c0"></div>
<div style="left:499px;top:444px;width:1px;height:17px;background:#c0c0c0"></div>
<div style="left:504px;top:444px;width:1px;height:17px;background:#c0c0c0"></div>
<div style="left:510px;top:444px;width:1px;height:17px;background:#c0c0c0"></div>
<div style="left:560px;top:444px;width:1px;height:17px;background:#c0c0c0"></div>
<div style="left:591px;top:444px;width:1px;height:17px;background:#c0c0c0"></div>
<div style="left:716px;top:444px;width:1px;height:17px;background:#c0c0c0"></div>
<div style="left:758px;top:444px;width:1px;height:17px;background:#c0c0c0"></div>
<div style="left:5px;top:444px;width:124px;height:17px;overflow:hidden"><span class="t ms" style="left:3px;top:3px;font-size:12px;font-weight:normal;transform:scaleX(0.88);color:#008000">13:10</span></div>
<div style="left:130px;top:444px;width:81px;height:17px;overflow:hidden"><span class="t ms" style="left:3px;top:3px;font-size:12px;font-weight:normal;transform:scaleX(0.88);color:#008000">03.04.2018</span></div>
<div style="left:212px;top:444px;width:37px;height:17px;overflow:hidden"><span class="t ms" style="left:3px;top:3px;font-size:12px;font-weight:normal;transform:scaleX(0.88);color:#008000">007</span></div>
<div style="left:0px;top:462px;width:4px;height:17px;background:#d6d5d9;box-shadow:inset 0 1px #fff,inset -1px 0 #808080"></div>
<div style="left:0px;top:479px;width:4px;height:1px;background:#000"></div>
<div style="left:4px;top:462px;width:1px;height:18px;background:#000"></div>
<div style="left:5px;top:479px;width:754px;height:1px;background:#c0c0c0"></div>
<div style="left:129px;top:462px;width:1px;height:17px;background:#c0c0c0"></div>
<div style="left:211px;top:462px;width:1px;height:17px;background:#c0c0c0"></div>
<div style="left:249px;top:462px;width:1px;height:17px;background:#c0c0c0"></div>
<div style="left:374px;top:462px;width:1px;height:17px;background:#c0c0c0"></div>
<div style="left:499px;top:462px;width:1px;height:17px;background:#c0c0c0"></div>
<div style="left:504px;top:462px;width:1px;height:17px;background:#c0c0c0"></div>
<div style="left:510px;top:462px;width:1px;height:17px;background:#c0c0c0"></div>
<div style="left:560px;top:462px;width:1px;height:17px;background:#c0c0c0"></div>
<div style="left:591px;top:462px;width:1px;height:17px;background:#c0c0c0"></div>
<div style="left:716px;top:462px;width:1px;height:17px;background:#c0c0c0"></div>
<div style="left:758px;top:462px;width:1px;height:17px;background:#c0c0c0"></div>
<div style="left:5px;top:462px;width:124px;height:17px;overflow:hidden"><span class="t ms" style="left:3px;top:3px;font-size:12px;font-weight:normal;transform:scaleX(0.88);color:#008000">13:13</span></div>
<div style="left:130px;top:462px;width:81px;height:17px;overflow:hidden"><span class="t ms" style="left:3px;top:3px;font-size:12px;font-weight:normal;transform:scaleX(0.88);color:#008000">03.04.2018</span></div>
<div style="left:212px;top:462px;width:37px;height:17px;overflow:hidden"><span class="t ms" style="left:3px;top:3px;font-size:12px;font-weight:normal;transform:scaleX(0.88);color:#008000">009</span></div>
<div style="left:0px;top:480px;width:4px;height:17px;background:#d6d5d9;box-shadow:inset 0 1px #fff,inset -1px 0 #808080"></div>
<div style="left:0px;top:497px;width:4px;height:1px;background:#000"></div>
<div style="left:4px;top:480px;width:1px;height:18px;background:#000"></div>
<div style="left:5px;top:497px;width:754px;height:1px;background:#c0c0c0"></div>
<div style="left:129px;top:480px;width:1px;height:17px;background:#c0c0c0"></div>
<div style="left:211px;top:480px;width:1px;height:17px;background:#c0c0c0"></div>
<div style="left:249px;top:480px;width:1px;height:17px;background:#c0c0c0"></div>
<div style="left:374px;top:480px;width:1px;height:17px;background:#c0c0c0"></div>
<div style="left:499px;top:480px;width:1px;height:17px;background:#c0c0c0"></div>
<div style="left:504px;top:480px;width:1px;height:17px;background:#c0c0c0"></div>
<div style="left:510px;top:480px;width:1px;height:17px;background:#c0c0c0"></div>
<div style="left:560px;top:480px;width:1px;height:17px;background:#c0c0c0"></div>
<div style="left:591px;top:480px;width:1px;height:17px;background:#c0c0c0"></div>
<div style="left:716px;top:480px;width:1px;height:17px;background:#c0c0c0"></div>
<div style="left:758px;top:480px;width:1px;height:17px;background:#c0c0c0"></div>
<div style="left:5px;top:480px;width:124px;height:17px;overflow:hidden"><span class="t ms" style="left:3px;top:3px;font-size:12px;font-weight:normal;transform:scaleX(0.88);color:#808000">13:17</span></div>
<div style="left:130px;top:480px;width:81px;height:17px;overflow:hidden"><span class="t ms" style="left:3px;top:3px;font-size:12px;font-weight:normal;transform:scaleX(0.88);color:#808000">03.04.2018</span></div>
<div style="left:212px;top:480px;width:37px;height:17px;overflow:hidden"><span class="t ms" style="left:3px;top:3px;font-size:12px;font-weight:normal;transform:scaleX(0.88);color:#808000">038</span></div>
<div style="left:0px;top:498px;width:4px;height:17px;background:#d6d5d9;box-shadow:inset 0 1px #fff,inset -1px 0 #808080"></div>
<div style="left:0px;top:515px;width:4px;height:1px;background:#000"></div>
<div style="left:4px;top:498px;width:1px;height:18px;background:#000"></div>
<div style="left:5px;top:515px;width:754px;height:1px;background:#c0c0c0"></div>
<div style="left:129px;top:498px;width:1px;height:17px;background:#c0c0c0"></div>
<div style="left:211px;top:498px;width:1px;height:17px;background:#c0c0c0"></div>
<div style="left:249px;top:498px;width:1px;height:17px;background:#c0c0c0"></div>
<div style="left:374px;top:498px;width:1px;height:17px;background:#c0c0c0"></div>
<div style="left:499px;top:498px;width:1px;height:17px;background:#c0c0c0"></div>
<div style="left:504px;top:498px;width:1px;height:17px;background:#c0c0c0"></div>
<div style="left:510px;top:498px;width:1px;height:17px;background:#c0c0c0"></div>
<div style="left:560px;top:498px;width:1px;height:17px;background:#c0c0c0"></div>
<div style="left:591px;top:498px;width:1px;height:17px;background:#c0c0c0"></div>
<div style="left:716px;top:498px;width:1px;height:17px;background:#c0c0c0"></div>
<div style="left:758px;top:498px;width:1px;height:17px;background:#c0c0c0"></div>
<div style="left:5px;top:498px;width:124px;height:17px;overflow:hidden"><span class="t ms" style="left:3px;top:3px;font-size:12px;font-weight:normal;transform:scaleX(0.88);color:#008000">13:18</span></div>
<div style="left:130px;top:498px;width:81px;height:17px;overflow:hidden"><span class="t ms" style="left:3px;top:3px;font-size:12px;font-weight:normal;transform:scaleX(0.88);color:#008000">03.04.2018</span></div>
<div style="left:212px;top:498px;width:37px;height:17px;overflow:hidden"><span class="t ms" style="left:3px;top:3px;font-size:12px;font-weight:normal;transform:scaleX(0.88);color:#008000">010</span></div>
<div style="left:0px;top:516px;width:4px;height:17px;background:#d6d5d9;box-shadow:inset 0 1px #fff,inset -1px 0 #808080"></div>
<div style="left:0px;top:533px;width:4px;height:1px;background:#000"></div>
<div style="left:4px;top:516px;width:1px;height:18px;background:#000"></div>
<div style="left:5px;top:533px;width:754px;height:1px;background:#c0c0c0"></div>
<div style="left:129px;top:516px;width:1px;height:17px;background:#c0c0c0"></div>
<div style="left:211px;top:516px;width:1px;height:17px;background:#c0c0c0"></div>
<div style="left:249px;top:516px;width:1px;height:17px;background:#c0c0c0"></div>
<div style="left:374px;top:516px;width:1px;height:17px;background:#c0c0c0"></div>
<div style="left:499px;top:516px;width:1px;height:17px;background:#c0c0c0"></div>
<div style="left:504px;top:516px;width:1px;height:17px;background:#c0c0c0"></div>
<div style="left:510px;top:516px;width:1px;height:17px;background:#c0c0c0"></div>
<div style="left:560px;top:516px;width:1px;height:17px;background:#c0c0c0"></div>
<div style="left:591px;top:516px;width:1px;height:17px;background:#c0c0c0"></div>
<div style="left:716px;top:516px;width:1px;height:17px;background:#c0c0c0"></div>
<div style="left:758px;top:516px;width:1px;height:17px;background:#c0c0c0"></div>
<div style="left:5px;top:516px;width:124px;height:17px;overflow:hidden"><span class="t ms" style="left:3px;top:3px;font-size:12px;font-weight:normal;transform:scaleX(0.88);color:#808000">13:15</span></div>
<div style="left:130px;top:516px;width:81px;height:17px;overflow:hidden"><span class="t ms" style="left:3px;top:3px;font-size:12px;font-weight:normal;transform:scaleX(0.88);color:#808000">03.04.2018</span></div>
<div style="left:212px;top:516px;width:37px;height:17px;overflow:hidden"><span class="t ms" style="left:3px;top:3px;font-size:12px;font-weight:normal;transform:scaleX(0.88);color:#808000">037</span></div>
<div style="left:0px;top:534px;width:4px;height:17px;background:#d6d5d9;box-shadow:inset 0 1px #fff,inset -1px 0 #808080"></div>
<div style="left:0px;top:551px;width:4px;height:1px;background:#000"></div>
<div style="left:4px;top:534px;width:1px;height:18px;background:#000"></div>
<div style="left:5px;top:551px;width:754px;height:1px;background:#c0c0c0"></div>
<div style="left:129px;top:534px;width:1px;height:17px;background:#c0c0c0"></div>
<div style="left:211px;top:534px;width:1px;height:17px;background:#c0c0c0"></div>
<div style="left:249px;top:534px;width:1px;height:17px;background:#c0c0c0"></div>
<div style="left:374px;top:534px;width:1px;height:17px;background:#c0c0c0"></div>
<div style="left:499px;top:534px;width:1px;height:17px;background:#c0c0c0"></div>
<div style="left:504px;top:534px;width:1px;height:17px;background:#c0c0c0"></div>
<div style="left:510px;top:534px;width:1px;height:17px;background:#c0c0c0"></div>
<div style="left:560px;top:534px;width:1px;height:17px;background:#c0c0c0"></div>
<div style="left:591px;top:534px;width:1px;height:17px;background:#c0c0c0"></div>
<div style="left:716px;top:534px;width:1px;height:17px;background:#c0c0c0"></div>
<div style="left:758px;top:534px;width:1px;height:17px;background:#c0c0c0"></div>
<div style="left:5px;top:534px;width:124px;height:17px;overflow:hidden"><span class="t ms" style="left:3px;top:3px;font-size:12px;font-weight:normal;transform:scaleX(0.88);color:#0000ff">13:18</span></div>
<div style="left:130px;top:534px;width:81px;height:17px;overflow:hidden"><span class="t ms" style="left:3px;top:3px;font-size:12px;font-weight:normal;transform:scaleX(0.88);color:#0000ff">03.04.2018</span></div>
<div style="left:212px;top:534px;width:37px;height:17px;overflow:hidden"><span class="t ms" style="left:3px;top:3px;font-size:12px;font-weight:normal;transform:scaleX(0.88);color:#0000ff">009</span></div>
<div style="left:0px;top:552px;width:4px;height:17px;background:#d6d5d9;box-shadow:inset 0 1px #fff,inset -1px 0 #808080"></div>
<div style="left:0px;top:569px;width:4px;height:1px;background:#000"></div>
<div style="left:4px;top:552px;width:1px;height:18px;background:#000"></div>
<div style="left:5px;top:569px;width:754px;height:1px;background:#c0c0c0"></div>
<div style="left:129px;top:552px;width:1px;height:17px;background:#c0c0c0"></div>
<div style="left:211px;top:552px;width:1px;height:17px;background:#c0c0c0"></div>
<div style="left:249px;top:552px;width:1px;height:17px;background:#c0c0c0"></div>
<div style="left:374px;top:552px;width:1px;height:17px;background:#c0c0c0"></div>
<div style="left:499px;top:552px;width:1px;height:17px;background:#c0c0c0"></div>
<div style="left:504px;top:552px;width:1px;height:17px;background:#c0c0c0"></div>
<div style="left:510px;top:552px;width:1px;height:17px;background:#c0c0c0"></div>
<div style="left:560px;top:552px;width:1px;height:17px;background:#c0c0c0"></div>
<div style="left:591px;top:552px;width:1px;height:17px;background:#c0c0c0"></div>
<div style="left:716px;top:552px;width:1px;height:17px;background:#c0c0c0"></div>
<div style="left:758px;top:552px;width:1px;height:17px;background:#c0c0c0"></div>
<div style="left:5px;top:552px;width:124px;height:17px;overflow:hidden"><span class="t ms" style="left:3px;top:3px;font-size:12px;font-weight:normal;transform:scaleX(0.88);color:#008000">13:21</span></div>
<div style="left:130px;top:552px;width:81px;height:17px;overflow:hidden"><span class="t ms" style="left:3px;top:3px;font-size:12px;font-weight:normal;transform:scaleX(0.88);color:#008000">03.04.2018</span></div>
<div style="left:212px;top:552px;width:37px;height:17px;overflow:hidden"><span class="t ms" style="left:3px;top:3px;font-size:12px;font-weight:normal;transform:scaleX(0.88);color:#008000">020</span></div>
<div style="left:0px;top:570px;width:4px;height:17px;background:#d6d5d9;box-shadow:inset 0 1px #fff,inset -1px 0 #808080"></div>
<div style="left:0px;top:587px;width:4px;height:1px;background:#000"></div>
<div style="left:4px;top:570px;width:1px;height:18px;background:#000"></div>
<div style="left:5px;top:587px;width:754px;height:1px;background:#c0c0c0"></div>
<div style="left:129px;top:570px;width:1px;height:17px;background:#c0c0c0"></div>
<div style="left:211px;top:570px;width:1px;height:17px;background:#c0c0c0"></div>
<div style="left:249px;top:570px;width:1px;height:17px;background:#c0c0c0"></div>
<div style="left:374px;top:570px;width:1px;height:17px;background:#c0c0c0"></div>
<div style="left:499px;top:570px;width:1px;height:17px;background:#c0c0c0"></div>
<div style="left:504px;top:570px;width:1px;height:17px;background:#c0c0c0"></div>
<div style="left:510px;top:570px;width:1px;height:17px;background:#c0c0c0"></div>
<div style="left:560px;top:570px;width:1px;height:17px;background:#c0c0c0"></div>
<div style="left:591px;top:570px;width:1px;height:17px;background:#c0c0c0"></div>
<div style="left:716px;top:570px;width:1px;height:17px;background:#c0c0c0"></div>
<div style="left:758px;top:570px;width:1px;height:17px;background:#c0c0c0"></div>
<div style="left:5px;top:570px;width:124px;height:17px;overflow:hidden"><span class="t ms" style="left:3px;top:3px;font-size:12px;font-weight:normal;transform:scaleX(0.88);color:#008000">13:22</span></div>
<div style="left:130px;top:570px;width:81px;height:17px;overflow:hidden"><span class="t ms" style="left:3px;top:3px;font-size:12px;font-weight:normal;transform:scaleX(0.88);color:#008000">03.04.2018</span></div>
<div style="left:212px;top:570px;width:37px;height:17px;overflow:hidden"><span class="t ms" style="left:3px;top:3px;font-size:12px;font-weight:normal;transform:scaleX(0.88);color:#008000">009</span></div>
<div style="left:250px;top:570px;width:124px;height:17px;overflow:hidden"><span class="t ms" style="left:3px;top:3px;font-size:12px;font-weight:normal;transform:scaleX(0.88);color:#008000">0:00</span></div>
<div style="left:375px;top:570px;width:124px;height:17px;overflow:hidden"><span class="t ms" style="left:3px;top:3px;font-size:12px;font-weight:normal;transform:scaleX(0.88);color:#008000">423</span></div>
<div style="left:511px;top:570px;width:49px;height:17px;overflow:hidden"><span class="t ms" style="left:3px;top:3px;font-size:12px;font-weight:normal;transform:scaleX(0.88);color:#008000">0,00р.</span></div>
<div style="left:561px;top:570px;width:30px;height:17px;overflow:hidden"><span class="t ms" style="left:3px;top:3px;font-size:12px;font-weight:normal;transform:scaleX(0.88);color:#008000">60269</span></div>
<div style="left:592px;top:570px;width:124px;height:17px;overflow:hidden"><span class="t ms" style="left:3px;top:3px;font-size:12px;font-weight:normal;transform:scaleX(0.95);color:#008000">Городской</span></div>
<div style="left:0px;top:588px;width:4px;height:17px;background:#d6d5d9;box-shadow:inset 0 1px #fff,inset -1px 0 #808080"></div>
<div style="left:0px;top:605px;width:4px;height:1px;background:#000"></div>
<div style="left:4px;top:588px;width:1px;height:18px;background:#000"></div>
<div style="left:5px;top:605px;width:754px;height:1px;background:#c0c0c0"></div>
<div style="left:129px;top:588px;width:1px;height:17px;background:#c0c0c0"></div>
<div style="left:211px;top:588px;width:1px;height:17px;background:#c0c0c0"></div>
<div style="left:249px;top:588px;width:1px;height:17px;background:#c0c0c0"></div>
<div style="left:374px;top:588px;width:1px;height:17px;background:#c0c0c0"></div>
<div style="left:499px;top:588px;width:1px;height:17px;background:#c0c0c0"></div>
<div style="left:504px;top:588px;width:1px;height:17px;background:#c0c0c0"></div>
<div style="left:510px;top:588px;width:1px;height:17px;background:#c0c0c0"></div>
<div style="left:560px;top:588px;width:1px;height:17px;background:#c0c0c0"></div>
<div style="left:591px;top:588px;width:1px;height:17px;background:#c0c0c0"></div>
<div style="left:716px;top:588px;width:1px;height:17px;background:#c0c0c0"></div>
<div style="left:758px;top:588px;width:1px;height:17px;background:#c0c0c0"></div>
<div style="left:5px;top:588px;width:124px;height:17px;overflow:hidden"><span class="t ms" style="left:3px;top:3px;font-size:12px;font-weight:normal;transform:scaleX(0.88);color:#008000">13:19</span></div>
<div style="left:130px;top:588px;width:81px;height:17px;overflow:hidden"><span class="t ms" style="left:3px;top:3px;font-size:12px;font-weight:normal;transform:scaleX(0.88);color:#008000">03.04.2018</span></div>
<div style="left:212px;top:588px;width:37px;height:17px;overflow:hidden"><span class="t ms" style="left:3px;top:3px;font-size:12px;font-weight:normal;transform:scaleX(0.88);color:#008000">010</span></div>
<div style="left:250px;top:588px;width:124px;height:17px;overflow:hidden"><span class="t ms" style="left:3px;top:3px;font-size:12px;font-weight:normal;transform:scaleX(0.88);color:#008000">5:03</span></div>
<div style="left:375px;top:588px;width:124px;height:17px;overflow:hidden"><span class="t ms" style="left:3px;top:3px;font-size:12px;font-weight:normal;transform:scaleX(0.88);color:#008000">560</span></div>
<div style="left:511px;top:588px;width:49px;height:17px;overflow:hidden"><span class="t ms" style="left:3px;top:3px;font-size:12px;font-weight:normal;transform:scaleX(0.88);color:#008000">0,00р.</span></div>
<div style="left:561px;top:588px;width:30px;height:17px;overflow:hidden"><span class="t ms" style="left:3px;top:3px;font-size:12px;font-weight:normal;transform:scaleX(0.88);color:#008000">70318</span></div>
<div style="left:592px;top:588px;width:124px;height:17px;overflow:hidden"><span class="t ms" style="left:3px;top:3px;font-size:12px;font-weight:normal;transform:scaleX(0.95);color:#008000">Городской</span></div>
<div style="left:0px;top:606px;width:4px;height:17px;background:#d6d5d9;box-shadow:inset 0 1px #fff,inset -1px 0 #808080"></div>
<div style="left:0px;top:623px;width:4px;height:1px;background:#000"></div>
<div style="left:4px;top:606px;width:1px;height:18px;background:#000"></div>
<div style="left:5px;top:623px;width:754px;height:1px;background:#c0c0c0"></div>
<div style="left:129px;top:606px;width:1px;height:17px;background:#c0c0c0"></div>
<div style="left:211px;top:606px;width:1px;height:17px;background:#c0c0c0"></div>
<div style="left:249px;top:606px;width:1px;height:17px;background:#c0c0c0"></div>
<div style="left:374px;top:606px;width:1px;height:17px;background:#c0c0c0"></div>
<div style="left:499px;top:606px;width:1px;height:17px;background:#c0c0c0"></div>
<div style="left:504px;top:606px;width:1px;height:17px;background:#c0c0c0"></div>
<div style="left:510px;top:606px;width:1px;height:17px;background:#c0c0c0"></div>
<div style="left:560px;top:606px;width:1px;height:17px;background:#c0c0c0"></div>
<div style="left:591px;top:606px;width:1px;height:17px;background:#c0c0c0"></div>
<div style="left:716px;top:606px;width:1px;height:17px;background:#c0c0c0"></div>
<div style="left:758px;top:606px;width:1px;height:17px;background:#c0c0c0"></div>
<div style="left:5px;top:606px;width:124px;height:17px;overflow:hidden"><span class="t ms" style="left:3px;top:3px;font-size:12px;font-weight:normal;transform:scaleX(0.88);color:#008000">13:23</span></div>
<div style="left:130px;top:606px;width:81px;height:17px;overflow:hidden"><span class="t ms" style="left:3px;top:3px;font-size:12px;font-weight:normal;transform:scaleX(0.88);color:#008000">03.04.2018</span></div>
<div style="left:212px;top:606px;width:37px;height:17px;overflow:hidden"><span class="t ms" style="left:3px;top:3px;font-size:12px;font-weight:normal;transform:scaleX(0.88);color:#008000">009</span></div>
<div style="left:250px;top:606px;width:124px;height:17px;overflow:hidden"><span class="t ms" style="left:3px;top:3px;font-size:12px;font-weight:normal;transform:scaleX(0.88);color:#008000">1:02</span></div>
<div style="left:375px;top:606px;width:124px;height:17px;overflow:hidden"><span class="t ms" style="left:3px;top:3px;font-size:12px;font-weight:normal;transform:scaleX(0.88);color:#008000">209</span></div>
<div style="left:511px;top:606px;width:49px;height:17px;overflow:hidden"><span class="t ms" style="left:3px;top:3px;font-size:12px;font-weight:normal;transform:scaleX(0.88);color:#008000">0,00р.</span></div>
<div style="left:561px;top:606px;width:30px;height:17px;overflow:hidden"><span class="t ms" style="left:3px;top:3px;font-size:12px;font-weight:normal;transform:scaleX(0.88);color:#008000">40020</span></div>
<div style="left:592px;top:606px;width:124px;height:17px;overflow:hidden"><span class="t ms" style="left:3px;top:3px;font-size:12px;font-weight:normal;transform:scaleX(0.95);color:#008000">Городской</span></div>
<div style="left:0px;top:624px;width:4px;height:17px;background:#d6d5d9;box-shadow:inset 0 1px #fff,inset -1px 0 #808080"></div>
<div style="left:0px;top:641px;width:4px;height:1px;background:#000"></div>
<div style="left:4px;top:624px;width:1px;height:18px;background:#000"></div>
<div style="left:5px;top:641px;width:754px;height:1px;background:#c0c0c0"></div>
<div style="left:129px;top:624px;width:1px;height:17px;background:#c0c0c0"></div>
<div style="left:211px;top:624px;width:1px;height:17px;background:#c0c0c0"></div>
<div style="left:249px;top:624px;width:1px;height:17px;background:#c0c0c0"></div>
<div style="left:374px;top:624px;width:1px;height:17px;background:#c0c0c0"></div>
<div style="left:499px;top:624px;width:1px;height:17px;background:#c0c0c0"></div>
<div style="left:504px;top:624px;width:1px;height:17px;background:#c0c0c0"></div>
<div style="left:510px;top:624px;width:1px;height:17px;background:#c0c0c0"></div>
<div style="left:560px;top:624px;width:1px;height:17px;background:#c0c0c0"></div>
<div style="left:591px;top:624px;width:1px;height:17px;background:#c0c0c0"></div>
<div style="left:716px;top:624px;width:1px;height:17px;background:#c0c0c0"></div>
<div style="left:758px;top:624px;width:1px;height:17px;background:#c0c0c0"></div>
<div style="left:5px;top:624px;width:124px;height:17px;overflow:hidden"><span class="t ms" style="left:3px;top:3px;font-size:12px;font-weight:normal;transform:scaleX(0.88);color:#0000ff">13:24</span></div>
<div style="left:130px;top:624px;width:81px;height:17px;overflow:hidden"><span class="t ms" style="left:3px;top:3px;font-size:12px;font-weight:normal;transform:scaleX(0.88);color:#0000ff">03.04.2018</span></div>
<div style="left:212px;top:624px;width:37px;height:17px;overflow:hidden"><span class="t ms" style="left:3px;top:3px;font-size:12px;font-weight:normal;transform:scaleX(0.88);color:#0000ff">020</span></div>
<div style="left:250px;top:624px;width:124px;height:17px;overflow:hidden"><span class="t ms" style="left:3px;top:3px;font-size:12px;font-weight:normal;transform:scaleX(0.88);color:#0000ff">1:38</span></div>
<div style="left:375px;top:624px;width:124px;height:17px;overflow:hidden"><span class="t ms" style="left:3px;top:3px;font-size:12px;font-weight:normal;transform:scaleX(0.88);color:#0000ff">229</span></div>
<div style="left:511px;top:624px;width:49px;height:17px;overflow:hidden"><span class="t ms" style="left:3px;top:3px;font-size:12px;font-weight:normal;transform:scaleX(0.88);color:#0000ff">3,00р.</span></div>
<div style="left:561px;top:624px;width:30px;height:17px;overflow:hidden"><span class="t ms" style="left:3px;top:3px;font-size:12px;font-weight:normal;transform:scaleX(0.88);color:#0000ff">8-(922</span></div>
<div style="left:592px;top:624px;width:124px;height:17px;overflow:hidden"><span class="t ms" style="left:3px;top:3px;font-size:12px;font-weight:normal;transform:scaleX(0.95);color:#0000ff">&lt;Мегафон&gt;</span></div>
<div style="left:0px;top:642px;width:4px;height:17px;background:#d6d5d9;box-shadow:inset 0 1px #fff,inset -1px 0 #808080"></div>
<div style="left:0px;top:659px;width:4px;height:1px;background:#000"></div>
<div style="left:4px;top:642px;width:1px;height:18px;background:#000"></div>
<div style="left:5px;top:659px;width:754px;height:1px;background:#c0c0c0"></div>
<div style="left:129px;top:642px;width:1px;height:17px;background:#c0c0c0"></div>
<div style="left:211px;top:642px;width:1px;height:17px;background:#c0c0c0"></div>
<div style="left:249px;top:642px;width:1px;height:17px;background:#c0c0c0"></div>
<div style="left:374px;top:642px;width:1px;height:17px;background:#c0c0c0"></div>
<div style="left:499px;top:642px;width:1px;height:17px;background:#c0c0c0"></div>
<div style="left:504px;top:642px;width:1px;height:17px;background:#c0c0c0"></div>
<div style="left:510px;top:642px;width:1px;height:17px;background:#c0c0c0"></div>
<div style="left:560px;top:642px;width:1px;height:17px;background:#c0c0c0"></div>
<div style="left:591px;top:642px;width:1px;height:17px;background:#c0c0c0"></div>
<div style="left:716px;top:642px;width:1px;height:17px;background:#c0c0c0"></div>
<div style="left:758px;top:642px;width:1px;height:17px;background:#c0c0c0"></div>
<div style="left:5px;top:642px;width:124px;height:17px;overflow:hidden"><span class="t ms" style="left:3px;top:3px;font-size:12px;font-weight:normal;transform:scaleX(0.88);color:#008000">13:24</span></div>
<div style="left:130px;top:642px;width:81px;height:17px;overflow:hidden"><span class="t ms" style="left:3px;top:3px;font-size:12px;font-weight:normal;transform:scaleX(0.88);color:#008000">03.04.2018</span></div>
<div style="left:212px;top:642px;width:37px;height:17px;overflow:hidden"><span class="t ms" style="left:3px;top:3px;font-size:12px;font-weight:normal;transform:scaleX(0.88);color:#008000">007</span></div>
<div style="left:250px;top:642px;width:124px;height:17px;overflow:hidden"><span class="t ms" style="left:3px;top:3px;font-size:12px;font-weight:normal;transform:scaleX(0.88);color:#008000">2:09</span></div>
<div style="left:375px;top:642px;width:124px;height:17px;overflow:hidden"><span class="t ms" style="left:3px;top:3px;font-size:12px;font-weight:normal;transform:scaleX(0.88);color:#008000">753</span></div>
<div style="left:511px;top:642px;width:49px;height:17px;overflow:hidden"><span class="t ms" style="left:3px;top:3px;font-size:12px;font-weight:normal;transform:scaleX(0.88);color:#008000">0,00р.</span></div>
<div style="left:561px;top:642px;width:30px;height:17px;overflow:hidden"><span class="t ms" style="left:3px;top:3px;font-size:12px;font-weight:normal;transform:scaleX(0.88);color:#008000">40301</span></div>
<div style="left:592px;top:642px;width:124px;height:17px;overflow:hidden"><span class="t ms" style="left:3px;top:3px;font-size:12px;font-weight:normal;transform:scaleX(0.95);color:#008000">Городской</span></div>
<div style="left:508px;top:593px;width:1px;height:1px;background:#008000"></div><div style="left:509px;top:594px;width:1px;height:1px;background:#008000"></div><div style="left:508px;top:595px;width:1px;height:1px;background:#008000"></div>
<svg style="left:0px;top:647px" width="3" height="6" viewBox="0 0 3 6"><path d="M0 0.5 L2.5 3 L0 5.5 Z" fill="#000"/></svg>
<div style="left:997px;top:82px;width:7px;height:570px;background-color:#fff;background-image:repeating-conic-gradient(#d4d0c8 0 25%,#fff 0 50%);background-size:2px 2px"></div>
<div style="left:997px;top:66px;width:16px;height:16px;background:#d4d0c8;box-shadow:inset 1px 1px #d4d0c8,inset 2px 2px #fff,inset -1px -1px #404040,inset -2px -2px #808080"></div>
<svg style="left:1001px;top:71px" width="4" height="4" viewBox="0 0 4 4"><path d="M3 0 L-1 4 H7 Z" fill="#000"/></svg>
<div style="left:997px;top:636px;width:16px;height:15px;background:#d4d0c8;box-shadow:inset 1px 1px #d4d0c8,inset 2px 2px #fff,inset -1px -1px #404040,inset -2px -2px #808080"></div>
<div style="left:997px;top:651px;width:16px;height:16px;background:#d4d0c8;box-shadow:inset 1px 1px #d4d0c8,inset 2px 2px #fff,inset -1px -1px #404040,inset -2px -2px #808080"></div>
<svg style="left:1001px;top:657px" width="4" height="4" viewBox="0 0 4 4"><path d="M-1 0 H7 L3 4 Z" fill="#000"/></svg>
<div style="left:0px;top:667px;width:1004px;height:16px;background-color:#fff;background-image:repeating-conic-gradient(#d4d0c8 0 25%,#fff 0 50%);background-size:2px 2px"></div>
<div style="left:-8px;top:667px;width:17px;height:16px;background:#d4d0c8;box-shadow:inset 1px 1px #d4d0c8,inset 2px 2px #fff,inset -1px -1px #404040,inset -2px -2px #808080"></div>
<svg style="left:0px;top:671px" width="4" height="8" viewBox="0 0 4 8"><path d="M2 0 L-2 4 L2 8 Z" fill="#000"/></svg>
<div style="left:965px;top:667px;width:16px;height:16px;background:#d4d0c8;box-shadow:inset 1px 1px #d4d0c8,inset 2px 2px #fff,inset -1px -1px #404040,inset -2px -2px #808080"></div>
<div style="left:981px;top:667px;width:16px;height:16px;background:#d4d0c8;box-shadow:inset 1px 1px #d4d0c8,inset 2px 2px #fff,inset -1px -1px #404040,inset -2px -2px #808080"></div>
<svg style="left:986px;top:671px" width="4" height="8" viewBox="0 0 4 8"><path d="M0 0 L4 4 L0 8 Z" fill="#000"/></svg>
<div style="left:997px;top:667px;width:7px;height:16px;background:#d4d0c8"></div>
<div style="left:0px;top:683px;width:1004px;height:2px;background:#f4f4f4"></div>
<div style="left:0px;top:685px;width:1004px;height:1px;background:#a0a0a0"></div>
<div style="left:0px;top:686px;width:1004px;height:1px;background:#fff"></div>
<div style="left:0px;top:687px;width:1004px;height:17px;background:#d8d8d8"></div>
<div style="left:108px;top:689px;width:1px;height:12px;background:#a0a0a0"></div>
<div style="left:328px;top:689px;width:1px;height:12px;background:#a0a0a0"></div>
<div style="left:428px;top:689px;width:1px;height:12px;background:#a0a0a0"></div>
<span class="t" style="left:336px;top:688px;font-size:11px;font-weight:normal;">1219/1219</span>
<div style="left:0px;top:704px;width:1004px;height:36px;background:#d4d0c8;box-shadow:inset 0 1px #d4d0c8,inset 0 2px #fff"></div>
<div style="left:-4px;top:708px;width:48px;height:34px;background:#d4d0c8;box-shadow:inset 1px 1px #fff,inset -1px -1px #404040,inset -2px -2px #808080"></div>
<svg style="left:-4px;top:718px" width="16" height="16" viewBox="0 0 16 16"><path d="M1 2 Q4 0 7 2 L6 7 Q3 5 0 7Z" fill="#f25022"/><path d="M8 2 Q11 4 15 2 L14 7 Q11 9 7 7Z" fill="#7fba00"/><path d="M0 8 Q3 6 6 8 L5 13 Q2 11 -1 13Z" fill="#00a4ef"/><path d="M7 8 Q10 10 14 8 L13 13 Q10 15 6 13Z" fill="#ffb900"/></svg>
<span class="t" style="left:12px;top:721px;font-size:11px;font-weight:bold;transform:scaleX(1.1);color:#000">Пуск</span>
<svg style="left:62px;top:712px" width="30" height="30" viewBox="0 0 30 30"><circle cx="15" cy="15" r="15" fill="#db4437"/><path d="M15 15 L2 7.5 A15 15 0 0 0 7.5 28 Z" fill="#0f9d58"/><path d="M15 15 L7.5 28 A15 15 0 0 0 28 22.5 Z" fill="#0f9d58"/><path d="M15 15 L28 22.5 A15 15 0 0 0 28 7.5 L15 7.5 Z" fill="#ffcd40"/><path d="M15 15 L13 30 A15 15 0 0 0 28 22.5 Z" fill="#ffcd40"/><circle cx="15" cy="15" r="7" fill="#fff"/><circle cx="15" cy="15" r="5.5" fill="#4285f4"/></svg>
<div style="left:103px;top:708px;width:113px;height:34px;background:#d4d0c8;box-shadow:inset 1px 1px #fff,inset -1px -1px #404040,inset -2px -2px #808080"></div>
<div style="left:218px;top:708px;width:113px;height:34px;background:#d4d0c8;box-shadow:inset 1px 1px #fff,inset -1px -1px #404040,inset -2px -2px #808080"></div>
<div style="left:333px;top:708px;width:113px;height:34px;background:#d4d0c8;box-shadow:inset 1px 1px #fff,inset -1px -1px #404040,inset -2px -2px #808080"></div>
<div style="left:448px;top:708px;width:113px;height:34px;background:#d4d0c8;box-shadow:inset 1px 1px #fff,inset -1px -1px #404040,inset -2px -2px #808080"></div>
<div style="left:563px;top:708px;width:113px;height:34px;background:#d4d0c8;box-shadow:inset 1px 1px #fff,inset -1px -1px #404040,inset -2px -2px #808080"></div>
<div style="left:678px;top:708px;width:113px;height:34px;background:#d4d0c8;box-shadow:inset 1px 1px #fff,inset -1px -1px #404040,inset -2px -2px #808080"></div>
<svg style="left:108px;top:712px" width="30" height="30" viewBox="0 0 30 30"><circle cx="15" cy="15" r="15" fill="#db4437"/><path d="M15 15 L2 7.5 A15 15 0 0 0 7.5 28 Z" fill="#0f9d58"/><path d="M15 15 L7.5 28 A15 15 0 0 0 28 22.5 Z" fill="#0f9d58"/><path d="M15 15 L28 22.5 A15 15 0 0 0 28 7.5 L15 7.5 Z" fill="#ffcd40"/><path d="M15 15 L13 30 A15 15 0 0 0 28 22.5 Z" fill="#ffcd40"/><circle cx="15" cy="15" r="7" fill="#fff"/><circle cx="15" cy="15" r="5.5" fill="#4285f4"/></svg>
<svg style="left:127px;top:727px" width="10" height="13" viewBox="0 0 10 13"><path d="M2 1 L8 1 L8 13 L2 13 Z" fill="#fff" stroke="#888" stroke-width="1"/></svg>
<span class="t" style="left:143px;top:721px;font-size:11px;font-weight:normal;">windows 7 t...</span>
<span class="t" style="left:259px;top:721px;font-size:11px;font-weight:normal;">Total Comm...</span>
<span class="t" style="left:374px;top:721px;font-size:11px;font-weight:normal;">Сетевые п...</span>
<span class="t" style="left:487px;top:721px;font-size:11px;font-weight:normal;">Программы</span>
<span class="t" style="left:602px;top:721px;font-size:11px;font-weight:normal;">iPECS Web ...</span>
<span class="t" style="left:716px;top:721px;font-size:11px;font-weight:normal;">WinTariff</span>
<svg style="left:223px;top:711px" width="32" height="29" viewBox="0 0 32 29"><rect x="0" y="0" width="32" height="29" rx="2" fill="#1a3dbf"/><rect x="9" y="0" width="15" height="9" fill="#d8e0f0"/><rect x="18" y="1" width="4" height="6" fill="#1a3dbf"/><rect x="4" y="13" width="24" height="16" fill="#fff"/><rect x="6" y="16" width="20" height="1.5" fill="#e02020"/><rect x="6" y="20" width="20" height="1.5" fill="#e02020"/><rect x="6" y="24" width="20" height="1.5" fill="#e02020"/></svg>
<svg style="left:338px;top:711px" width="32" height="29" viewBox="0 0 32 29"><path d="M1 1 L9 3 L10 21 L2 19 Z" fill="#f2d67a" stroke="#b89a40" stroke-width=".6"/><path d="M9 8 L21 6 L21 17 L9 19Z" fill="#1a40c0"/><path d="M18 10 L28 9 L28 19 L18 20Z" fill="#4a80e8"/><path d="M6 24 L20 21 L20 26 L6 29Z" fill="#30c040"/><path d="M20 21 L26 23 L20 26Z" fill="#208030"/></svg>
<svg style="left:453px;top:711px" width="32" height="29" viewBox="0 0 32 29"><rect x="7" y="3" width="17" height="26" fill="#d0d0c8" stroke="#808078"/><rect x="10" y="1" width="15" height="6" fill="#b8b8b0" stroke="#808078" stroke-width=".6"/><circle cx="13" cy="22" r="6" fill="#e0e0e0" stroke="#8a8a8a"/><circle cx="13" cy="22" r="1.5" fill="#909090"/><rect x="17" y="9" width="7" height="6" fill="#e4c068"/></svg>
<svg style="left:568px;top:711px" width="32" height="29" viewBox="0 0 32 29"><circle cx="16" cy="18" r="11" fill="#1a7ad8"/><circle cx="16.5" cy="17" r="6" fill="#fff"/><rect x="10" y="16" width="13" height="2.5" fill="#1a7ad8"/><rect x="17" y="19" width="10" height="4" fill="#fff"/><ellipse cx="16" cy="15" rx="15" ry="6" fill="none" stroke="#f0b020" stroke-width="2.2" transform="rotate(-35 16 15)"/></svg>
<svg style="left:683px;top:711px" width="32" height="29" viewBox="0 0 32 29"><path d="M9 0 L27 3 L24 18 L6 15Z" fill="#f4c4a8"/><path d="M13 3 L23 5 M12 7 L22 9" stroke="#40a040" stroke-width="1.5"/><path d="M2 12 Q16 3 30 12 L28 17 L22 15 L10 15 L4 17Z" fill="#1a70d0"/><path d="M6 16 L26 16 L29 29 L3 29Z" fill="#2a88e8"/><circle cx="16" cy="23" r="5" fill="#c8e4ff"/></svg>
<div style="left:790px;top:708px;width:114px;height:34px;background:#fff;box-shadow:inset 1px 1px #404040,inset -1px -1px #fff,inset 2px 2px #808080"></div>
<svg style="left:797px;top:711px" width="29" height="29" viewBox="0 0 16 16"><defs><linearGradient id="pg" x1="0" y1="0" x2="1" y2="1"><stop offset="0" stop-color="#f0ecf8"/><stop offset="1" stop-color="#a090cc"/></linearGradient></defs><rect x="0" y="0" width="16" height="16" rx="1" fill="#fff"/><rect x="1" y="1" width="14" height="14" fill="url(#pg)"/><path d="M4.5 13.5 Q1.5 12 2 8 Q3 3.5 8 2.2 Q11 1.5 12.5 2.5 Q13.5 3.8 12 5 Q10.5 5.6 9 5.2 Q6.5 5.2 5.8 8 Q5.5 10.5 6.5 11.5 Q6.8 13.5 4.5 13.5Z" fill="#1c3a9a"/><path d="M9 8 H12 V10.5 H14 L10.5 14 L7 10.5 H9Z" fill="#fff" stroke="#2a4a70" stroke-width=".6"/></svg>
<span class="t" style="left:832px;top:721px;font-size:11px;font-weight:bold;transform:scaleX(1.05);">Pbxcollect</span>
<div style="left:909px;top:708px;width:100px;height:34px;background:#d4d0c8;box-shadow:inset 1px 1px #808080,inset -1px -1px #fff"></div>
<svg style="left:915px;top:720px" width="7" height="10" viewBox="0 0 7 10"><path d="M0.5 4.5 L3.5 1.5 L6.5 4.5 M0.5 8.5 L3.5 5.5 L6.5 8.5" stroke="#000" stroke-width="1.6" fill="none"/></svg>
<span class="t" style="left:946px;top:713px;font-size:11px;font-weight:normal;">12:45</span>
<span class="t" style="left:932px;top:729px;font-size:11px;font-weight:normal;">03.04.2018</span>
<svg style="left:996px;top:722px" width="10" height="14" viewBox="0 0 10 14"><rect x="0" y="0" width="10" height="12" fill="#2a6ab8"/><rect x="1" y="1" width="9" height="9" fill="#5a9ae0"/><rect x="0" y="12" width="10" height="2" fill="#404040"/></svg>
<div style="left:253px;top:92px;width:696px;height:480px;background:#d4d0c8;box-shadow:inset -1px -1px #404040,inset 1px 1px #d4d0c8,inset -2px -2px #808080,inset 2px 2px #fff"></div>
<div style="left:257px;top:96px;width:688px;height:18px;background:linear-gradient(90deg,#808080,#c0c0c0)"></div>
<svg style="left:259px;top:97px" width="16" height="16" viewBox="0 0 16 16"><defs><linearGradient id="pg" x1="0" y1="0" x2="1" y2="1"><stop offset="0" stop-color="#f0ecf8"/><stop offset="1" stop-color="#a090cc"/></linearGradient></defs><rect x="0" y="0" width="16" height="16" rx="1" fill="#fff"/><rect x="1" y="1" width="14" height="14" fill="url(#pg)"/><path d="M4.5 13.5 Q1.5 12 2 8 Q3 3.5 8 2.2 Q11 1.5 12.5 2.5 Q13.5 3.8 12 5 Q10.5 5.6 9 5.2 Q6.5 5.2 5.8 8 Q5.5 10.5 6.5 11.5 Q6.8 13.5 4.5 13.5Z" fill="#1c3a9a"/><path d="M9 8 H12 V10.5 H14 L10.5 14 L7 10.5 H9Z" fill="#fff" stroke="#2a4a70" stroke-width=".6"/></svg>
<span class="t" style="left:277px;top:99px;font-size:11px;font-weight:bold;transform:scaleX(1.04);color:#d4d0c8">PbxCollect</span>
<div style="left:893px;top:98px;width:16px;height:14px;background:#d4d0c8;box-shadow:inset 1px 1px #fff,inset -1px -1px #404040,inset -2px -2px #808080"></div>
<div style="left:909px;top:98px;width:16px;height:14px;background:#d4d0c8;box-shadow:inset 1px 1px #fff,inset -1px -1px #404040,inset -2px -2px #808080"></div>
<div style="left:927px;top:98px;width:16px;height:14px;background:#d4d0c8;box-shadow:inset 1px 1px #fff,inset -1px -1px #404040,inset -2px -2px #808080"></div>
<div style="left:897px;top:106px;width:6px;height:2px;background:#000"></div>
<div style="left:912px;top:100px;width:9px;height:9px;border:1px solid #000;border-top-width:2px"></div>
<svg style="left:931px;top:101px" width="8" height="7" viewBox="0 0 8 7"><path d="M0.5 0 L7.5 7 M7.5 0 L0.5 7" stroke="#000" stroke-width="1.6"/></svg>
<span class="t" style="left:263px;top:118px;font-size:11px;font-weight:normal;color:#808080">File</span>
<span class="t" style="left:291px;top:118px;font-size:11px;font-weight:normal;color:#808080">Setup</span>
<span class="t" style="left:331px;top:118px;font-size:11px;font-weight:normal;color:#808080">Info</span>
<div style="left:257px;top:134px;width:688px;height:25px;box-shadow:inset 1px 1px #fff,inset -1px -1px #808080"></div>
<div style="left:273px;top:140px;width:13px;height:13px;background:#fff;box-shadow:inset 1px 1px #808080,inset -1px -1px #fff,inset 2px 2px #404040,inset -2px -2px #d4d0c8"></div>
<svg style="left:276px;top:143px" width="7" height="7" viewBox="0 0 7 7" shape-rendering="crispEdges"><rect x="6" y="0" width="1" height="1"/><rect x="5" y="1" width="1" height="1"/><rect x="6" y="1" width="1" height="1"/><rect x="0" y="2" width="1" height="1"/><rect x="4" y="2" width="1" height="1"/><rect x="5" y="2" width="1" height="1"/><rect x="6" y="2" width="1" height="1"/><rect x="0" y="3" width="1" height="1"/><rect x="1" y="3" width="1" height="1"/><rect x="3" y="3" width="1" height="1"/><rect x="4" y="3" width="1" height="1"/><rect x="5" y="3" width="1" height="1"/><rect x="0" y="4" width="1" height="1"/><rect x="1" y="4" width="1" height="1"/><rect x="2" y="4" width="1" height="1"/><rect x="3" y="4" width="1" height="1"/><rect x="4" y="4" width="1" height="1"/><rect x="1" y="5" width="1" height="1"/><rect x="2" y="5" width="1" height="1"/><rect x="3" y="5" width="1" height="1"/><rect x="2" y="6" width="1" height="1"/></svg>
<span class="t ms" style="left:291px;top:140px;font-size:12px;font-weight:normal;transform:scaleX(0.9);">View raw data</span>
<div style="left:257px;top:179px;width:688px;height:196px;box-shadow:inset 1px 1px #fff,inset -1px -1px #404040,inset -2px -2px #808080"></div>
<div style="left:257px;top:160px;width:46px;height:20px;background:#d4d0c8;box-shadow:inset 1px 1px #fff,inset -1px 0 #404040,inset -2px 0 #808080;border-top-left-radius:2px"></div>
<span class="t ms" style="left:266px;top:163px;font-size:12px;font-weight:normal;transform:scaleX(0.85);">PBX 1</span>
<div style="left:261px;top:183px;width:680px;height:188px;background:#fff"></div>
<div style="left:257px;top:378px;width:688px;height:171px;background:#fff;box-shadow:inset 1px 1px #808080,inset -1px -1px #fff,inset 2px 2px #404040,inset -2px -2px #d4d0c8"></div>
<div style="left:279px;top:380px;width:664px;height:16px;background:#eefbee"></div>
<div style="left:259px;top:396px;width:684px;height:1px;background:#d4d0c8"></div>
<div style="left:259px;top:413px;width:684px;height:1px;background:#d4d0c8"></div>
<div style="left:259px;top:430px;width:684px;height:1px;background:#d4d0c8"></div>
<div style="left:259px;top:447px;width:684px;height:1px;background:#d4d0c8"></div>
<div style="left:259px;top:464px;width:684px;height:1px;background:#d4d0c8"></div>
<div style="left:259px;top:481px;width:684px;height:1px;background:#d4d0c8"></div>
<div style="left:259px;top:498px;width:684px;height:1px;background:#d4d0c8"></div>
<div style="left:259px;top:515px;width:684px;height:1px;background:#d4d0c8"></div>
<div style="left:259px;top:532px;width:684px;height:1px;background:#d4d0c8"></div>
<div style="left:384px;top:397px;width:1px;height:150px;background:#d4d0c8"></div>
<svg style="left:263px;top:382px" width="16" height="13" viewBox="0 0 16 13"><path d="M0.5 6.5 L3.5 3.5 L6 6 L12.5 0.5 L15.5 3.5 L6 12.5 Z" fill="#1e5a58" stroke="#0a3040" stroke-width=".8"/></svg>
<span class="t ms" style="left:282px;top:383px;font-size:12px;font-weight:normal;transform:scaleX(0.9);">03.04.2018 12:4</span>
<span class="t ms" style="left:282px;top:400px;font-size:12px;font-weight:normal;transform:scaleX(0.9);">03.04.2018 12:4</span>
<div style="left:257px;top:551px;width:688px;height:17px;box-shadow:inset 1px 1px #808080,inset 0 -1px #fff"></div>
<svg style="left:932px;top:555px" width="12" height="12" viewBox="0 0 12 12" shape-rendering="crispEdges"><rect x="11" y="0" width="1" height="1" fill="#fff"/><rect x="10" y="1" width="1" height="1" fill="#fff"/><rect x="11" y="1" width="1" height="1" fill="#808080"/><rect x="9" y="2" width="1" height="1" fill="#fff"/><rect x="10" y="2" width="1" height="1" fill="#808080"/><rect x="11" y="2" width="1" height="1" fill="#808080"/><rect x="8" y="3" width="1" height="1" fill="#fff"/><rect x="9" y="3" width="1" height="1" fill="#808080"/><rect x="10" y="3" width="1" height="1" fill="#808080"/><rect x="7" y="4" width="1" height="1" fill="#fff"/><rect x="8" y="4" width="1" height="1" fill="#808080"/><rect x="9" y="4" width="1" height="1" fill="#808080"/><rect x="11" y="4" width="1" height="1" fill="#fff"/><rect x="6" y="5" width="1" height="1" fill="#fff"/><rect x="7" y="5" width="1" height="1" fill="#808080"/><rect x="8" y="5" width="1" height="1" fill="#808080"/><rect x="10" y="5" width="1" height="1" fill="#fff"/><rect x="11" y="5" width="1" height="1" fill="#808080"/><rect x="5" y="6" width="1" height="1" fill="#fff"/><rect x="6" y="6" width="1" height="1" fill="#808080"/><rect x="7" y="6" width="1" height="1" fill="#808080"/><rect x="9" y="6" width="1" height="1" fill="#fff"/><rect x="10" y="6" width="1" height="1" fill="#808080"/><rect x="11" y="6" width="1" height="1" fill="#808080"/><rect x="4" y="7" width="1" height="1" fill="#fff"/><rect x="5" y="7" width="1" height="1" fill="#808080"/><rect x="6" y="7" width="1" height="1" fill="#808080"/><rect x="8" y="7" width="1" height="1" fill="#fff"/><rect x="9" y="7" width="1" height="1" fill="#808080"/><rect x="10" y="7" width="1" height="1" fill="#808080"/><rect x="3" y="8" width="1" height="1" fill="#fff"/><rect x="4" y="8" width="1" height="1" fill="#808080"/><rect x="5" y="8" width="1" height="1" fill="#808080"/><rect x="7" y="8" width="1" height="1" fill="#fff"/><rect x="8" y="8" width="1" height="1" fill="#808080"/><rect x="9" y="8" width="1" height="1" fill="#808080"/><rect x="11" y="8" width="1" height="1" fill="#fff"/><rect x="2" y="9" width="1" height="1" fill="#fff"/><rect x="3" y="9" width="1" height="1" fill="#808080"/><rect x="4" y="9" width="1" height="1" fill="#808080"/><rect x="6" y="9" width="1" height="1" fill="#fff"/><rect x="7" y="9" width="1" height="1" fill="#808080"/><rect x="8" y="9" width="1" height="1" fill="#808080"/><rect x="10" y="9" width="1" height="1" fill="#fff"/><rect x="11" y="9" width="1" height="1" fill="#808080"/><rect x="1" y="10" width="1" height="1" fill="#fff"/><rect x="2" y="10" width="1" height="1" fill="#808080"/><rect x="3" y="10" width="1" height="1" fill="#808080"/><rect x="5" y="10" width="1" height="1" fill="#fff"/><rect x="6" y="10" width="1" height="1" fill="#808080"/><rect x="7" y="10" width="1" height="1" fill="#808080"/><rect x="9" y="10" width="1" height="1" fill="#fff"/><rect x="10" y="10" width="1" height="1" fill="#808080"/><rect x="11" y="10" width="1" height="1" fill="#808080"/><rect x="0" y="11" width="1" height="1" fill="#fff"/><rect x="1" y="11" width="1" height="1" fill="#808080"/><rect x="2" y="11" width="1" height="1" fill="#808080"/><rect x="4" y="11" width="1" height="1" fill="#fff"/><rect x="5" y="11" width="1" height="1" fill="#808080"/><rect x="6" y="11" width="1" height="1" fill="#808080"/><rect x="8" y="11" width="1" height="1" fill="#fff"/><rect x="9" y="11" width="1" height="1" fill="#808080"/><rect x="10" y="11" width="1" height="1" fill="#808080"/></svg>
<div style="left:359px;top:175px;width:321px;height:298px;background:#d4d0c8;box-shadow:inset -1px -1px #404040,inset 1px 1px #d4d0c8,inset -2px -2px #808080,inset 2px 2px #fff"></div>
<div style="left:362px;top:178px;width:315px;height:18px;background:linear-gradient(90deg,#0a246a,#b2d4fa)"></div>
<span class="t" style="left:364px;top:181px;font-size:11px;font-weight:bold;transform:scaleX(1.08);color:#fff">Extra setup</span>
<div style="left:659px;top:180px;width:16px;height:14px;background:#d4d0c8;box-shadow:inset 1px 1px #fff,inset -1px -1px #404040,inset -2px -2px #808080"></div>
<svg style="left:663px;top:183px" width="8" height="7" viewBox="0 0 8 7"><path d="M0.5 0 L7.5 7 M7.5 0 L0.5 7" stroke="#000" stroke-width="1.6"/></svg>
<span class="t ms" style="left:370px;top:206px;font-size:12px;font-weight:normal;transform:scaleX(0.87);">Folder with Calls.dbf file:</span>
<div style="left:370px;top:221px;width:236px;height:20px;background:#fff;box-shadow:inset 1px 1px #808080,inset -1px -1px #fff,inset 2px 2px #404040,inset -2px -2px #d4d0c8"></div>
<div style="left:373px;top:224px;width:164px;height:14px;background:#0a246a"></div>
<span class="t ms" style="left:374px;top:225px;font-size:12px;font-weight:normal;transform:scaleX(0.91);color:#fff">C:\ProgramData\WinTariff32\Calls</span>
<div style="left:611px;top:220px;width:59px;height:23px;background:#d4d0c8;box-shadow:inset 1px 1px #fff,inset -1px -1px #404040,inset -2px -2px #808080"></div>
<span class="t ms" style="left:623px;top:225px;font-size:12px;font-weight:normal;transform:scaleX(0.9);">Browse</span>
<span class="t ms" style="left:374px;top:260px;font-size:12px;font-weight:normal;transform:scaleX(0.87);">Store calls longer then (seconds):</span>
<div style="left:532px;top:257px;width:35px;height:21px;background:#fff;box-shadow:inset 1px 1px #808080,inset -1px -1px #fff,inset 2px 2px #404040,inset -2px -2px #d4d0c8"></div>
<span class="t ms" style="left:536px;top:261px;font-size:12px;font-weight:normal;transform:scaleX(0.9);">0</span>
<div style="left:374px;top:280px;width:13px;height:13px;background:#fff;box-shadow:inset 1px 1px #808080,inset -1px -1px #fff,inset 2px 2px #404040,inset -2px -2px #d4d0c8"></div>
<svg style="left:377px;top:283px" width="7" height="7" viewBox="0 0 7 7" shape-rendering="crispEdges"><rect x="6" y="0" width="1" height="1"/><rect x="5" y="1" width="1" height="1"/><rect x="6" y="1" width="1" height="1"/><rect x="0" y="2" width="1" height="1"/><rect x="4" y="2" width="1" height="1"/><rect x="5" y="2" width="1" height="1"/><rect x="6" y="2" width="1" height="1"/><rect x="0" y="3" width="1" height="1"/><rect x="1" y="3" width="1" height="1"/><rect x="3" y="3" width="1" height="1"/><rect x="4" y="3" width="1" height="1"/><rect x="5" y="3" width="1" height="1"/><rect x="0" y="4" width="1" height="1"/><rect x="1" y="4" width="1" height="1"/><rect x="2" y="4" width="1" height="1"/><rect x="3" y="4" width="1" height="1"/><rect x="4" y="4" width="1" height="1"/><rect x="1" y="5" width="1" height="1"/><rect x="2" y="5" width="1" height="1"/><rect x="3" y="5" width="1" height="1"/><rect x="2" y="6" width="1" height="1"/></svg>
<span class="t ms" style="left:393px;top:281px;font-size:12px;font-weight:normal;transform:scaleX(0.88);">Store incoming calls</span>
<div style="left:370px;top:307px;width:299px;height:56px;box-shadow:inset 1px 1px #808080,inset -1px -1px #fff,inset 2px 2px #fff,inset -2px -2px #808080"></div>
<div style="left:376px;top:301px;width:99px;height:13px;background:#d4d0c8"></div>
<span class="t ms" style="left:379px;top:303px;font-size:12px;font-weight:normal;transform:scaleX(0.88);">Store outgoing calls</span>
<svg style="left:377px;top:320px" width="12" height="12" viewBox="0 0 12 12"><path d="M10.2 1.8 A5.8 5.8 0 0 0 1.8 10.2" fill="none" stroke="#808080" stroke-width="1"/><path d="M9.2 2.8 A4.4 4.4 0 0 0 2.8 9.2" fill="none" stroke="#404040" stroke-width="1"/><path d="M1.8 10.2 A5.8 5.8 0 0 0 10.2 1.8" fill="none" stroke="#fff" stroke-width="1"/><circle cx="6" cy="6" r="3.9" fill="#fff"/><rect x="4" y="4" width="4" height="4" rx="1" fill="#000"/></svg>
<span class="t ms" style="left:394px;top:321px;font-size:12px;font-weight:normal;transform:scaleX(0.9);">All calls</span>
<svg style="left:377px;top:340px" width="12" height="12" viewBox="0 0 12 12"><path d="M10.2 1.8 A5.8 5.8 0 0 0 1.8 10.2" fill="none" stroke="#808080" stroke-width="1"/><path d="M9.2 2.8 A4.4 4.4 0 0 0 2.8 9.2" fill="none" stroke="#404040" stroke-width="1"/><path d="M1.8 10.2 A5.8 5.8 0 0 0 10.2 1.8" fill="none" stroke="#fff" stroke-width="1"/><circle cx="6" cy="6" r="3.9" fill="#fff"/></svg>
<span class="t ms" style="left:395px;top:341px;font-size:12px;font-weight:normal;transform:scaleX(0.88);">Long-distance only. Prefixes</span>
<div style="left:533px;top:337px;width:128px;height:21px;background:#fff;box-shadow:inset 1px 1px #808080,inset -1px -1px #fff,inset 2px 2px #404040,inset -2px -2px #d4d0c8"></div>
<div style="left:535px;top:339px;width:124px;height:17px;overflow:hidden"><span class="t ms" style="left:2px;top:2px;font-size:12px;font-weight:normal;transform:scaleX(0.88);">8,810,810375,810380,810400</span></div>
<span class="t ms" style="left:374px;top:375px;font-size:12px;font-weight:normal;transform:scaleX(0.88);">Source for date/time:</span>
<div style="left:475px;top:371px;width:74px;height:21px;background:#fff;box-shadow:inset 1px 1px #808080,inset -1px -1px #fff,inset 2px 2px #404040,inset -2px -2px #d4d0c8"></div>
<span class="t ms" style="left:480px;top:376px;font-size:12px;font-weight:normal;transform:scaleX(0.85);">PBX</span>
<div style="left:532px;top:373px;width:16px;height:17px;background:#d4d0c8;box-shadow:inset 1px 1px #fff,inset -1px -1px #404040,inset -2px -2px #808080"></div>
<svg style="left:536px;top:379px" width="7" height="4" viewBox="0 0 7 4"><path d="M0 0 H7 L3.5 4 Z" fill="#000"/></svg>
<div style="left:374px;top:399px;width:13px;height:13px;background:#fff;box-shadow:inset 1px 1px #808080,inset -1px -1px #fff,inset 2px 2px #404040,inset -2px -2px #d4d0c8"></div>
<span class="t ms" style="left:393px;top:400px;font-size:12px;font-weight:normal;transform:scaleX(0.87);">Start PbxCollect.exe on system startup</span>
<div style="left:439px;top:426px;width:75px;height:23px;background:#d4d0c8;box-shadow:inset 0 0 0 1px #000,inset -2px -2px #404040,inset 2px 2px #fff,inset -3px -3px #808080"></div>
<span class="t ms" style="left:470px;top:431px;font-size:12px;font-weight:normal;transform:scaleX(0.9);">OK</span>
<div style="left:529px;top:426px;width:75px;height:23px;background:#d4d0c8;box-shadow:inset 1px 1px #fff,inset -1px -1px #404040,inset -2px -2px #808080"></div>
<span class="t ms" style="left:550px;top:431px;font-size:12px;font-weight:normal;transform:scaleX(0.93);">Cancel</span>
</body></html>
